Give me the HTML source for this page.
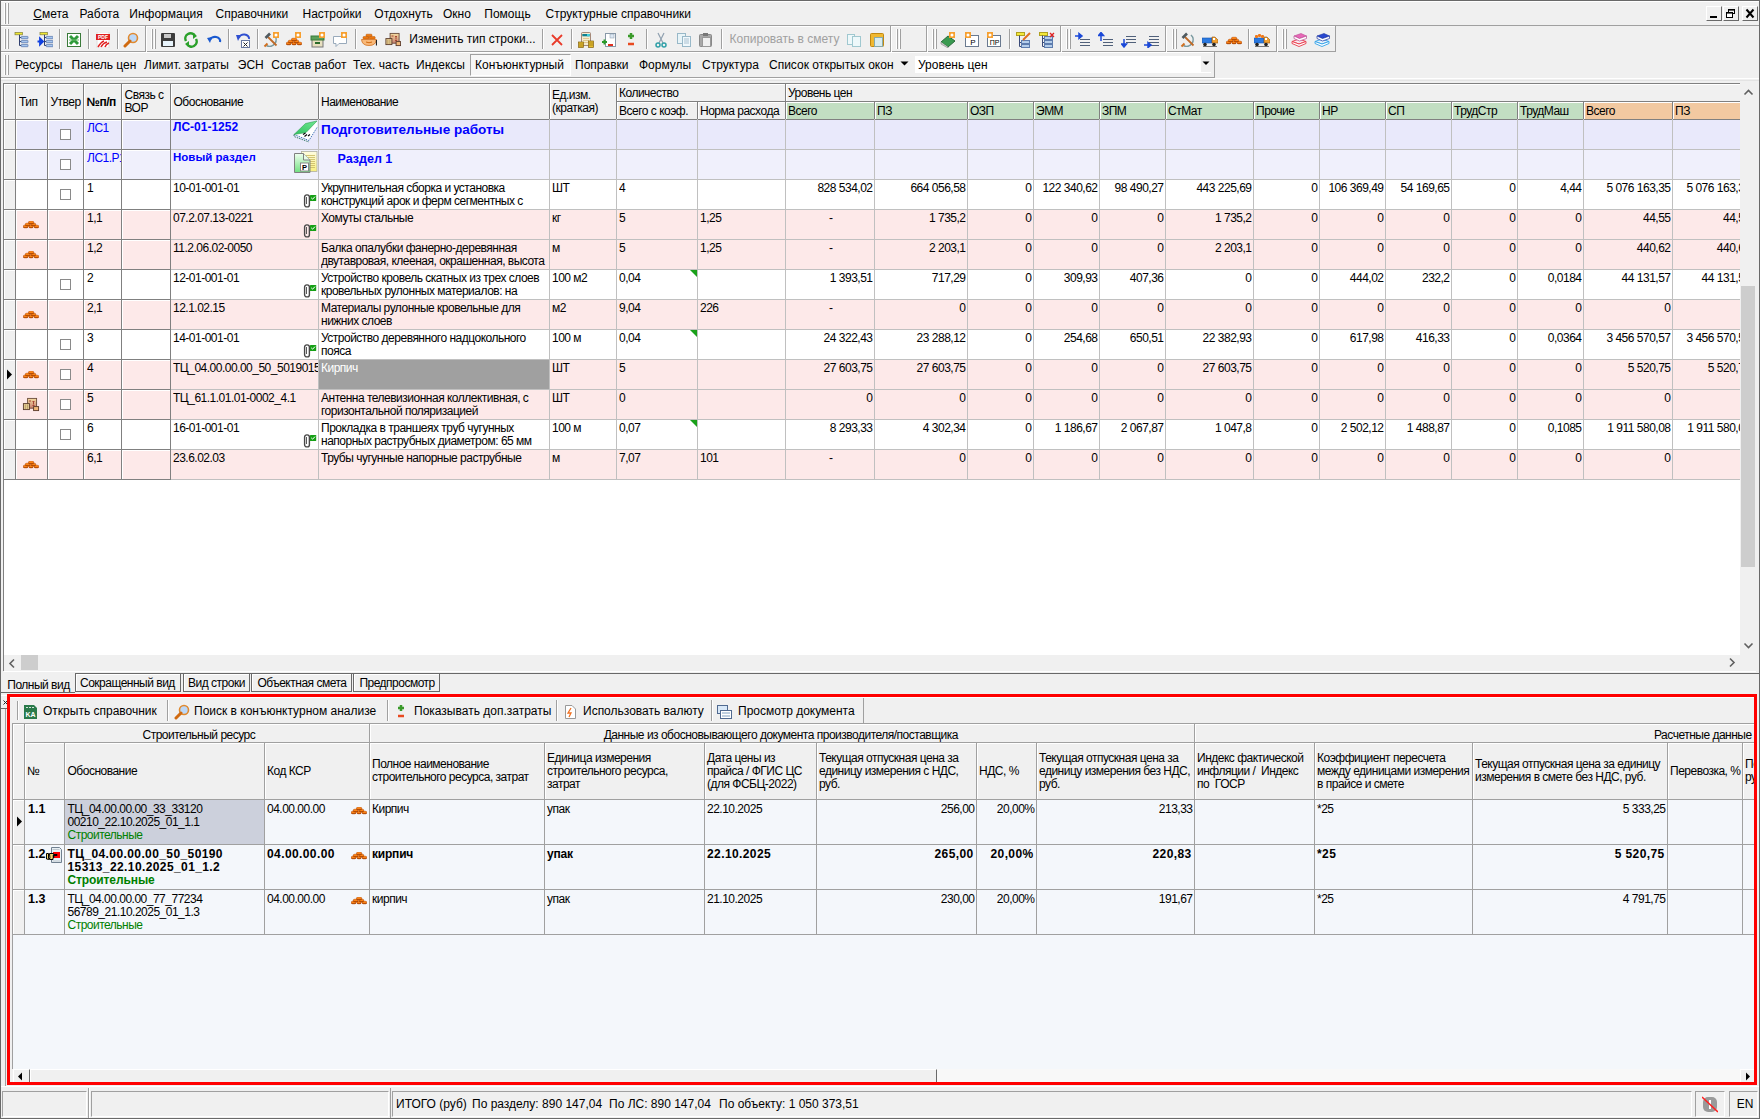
<!DOCTYPE html><html><head><meta charset="utf-8"><style>
html,body{margin:0;padding:0;}
body{width:1760px;height:1119px;position:relative;overflow:hidden;background:#f0f0f0;font-family:"Liberation Sans", sans-serif;}
div{position:absolute;box-sizing:border-box;}
</style></head><body>
<div style="left:0px;top:0px;width:1760px;height:1px;background:#696969"></div>
<div style="left:0px;top:0px;width:1px;height:1119px;background:#696969"></div>
<div style="left:1759px;top:0px;width:1px;height:1119px;background:#696969"></div>
<div style="left:0px;top:1118px;width:1760px;height:1px;background:#696969"></div>
<div style="left:1px;top:1px;width:1758px;height:1px;background:#ffffff"></div>
<div style="left:4px;top:3px;width:1px;height:21px;background:#ffffff"></div>
<div style="left:5px;top:3px;width:1px;height:21px;background:#a0a0a0"></div>
<div style="left:7px;top:3px;width:1px;height:21px;background:#ffffff"></div>
<div style="left:8px;top:3px;width:1px;height:21px;background:#a0a0a0"></div>
<div style="left:33.3px;top:6.84px;font-size:12px;line-height:14px;color:#000;white-space:nowrap;"><u>С</u>мета</div>
<div style="left:79.5px;top:6.84px;font-size:12px;line-height:14px;color:#000;white-space:nowrap;">Работа</div>
<div style="left:129.3px;top:6.84px;font-size:12px;line-height:14px;color:#000;white-space:nowrap;">Информация</div>
<div style="left:215.5px;top:6.84px;font-size:12px;line-height:14px;color:#000;white-space:nowrap;">Справочники</div>
<div style="left:302.5px;top:6.84px;font-size:12px;line-height:14px;color:#000;white-space:nowrap;">Настройки</div>
<div style="left:374.3px;top:6.84px;font-size:12px;line-height:14px;color:#000;white-space:nowrap;">Отдохнуть</div>
<div style="left:443px;top:6.84px;font-size:12px;line-height:14px;color:#000;white-space:nowrap;">Окно</div>
<div style="left:484.3px;top:6.84px;font-size:12px;line-height:14px;color:#000;white-space:nowrap;">Помощь</div>
<div style="left:545.5px;top:6.84px;font-size:12px;line-height:14px;color:#000;white-space:nowrap;">Структурные справочники</div>
<div style="left:1px;top:25px;width:1758px;height:1px;background:#a0a0a0"></div>
<div style="left:1706px;top:6px;width:16px;height:15px;background:#f0f0f0;border-top:1px solid #ffffff;border-left:1px solid #ffffff;border-right:1px solid #696969;border-bottom:1px solid #696969"></div>
<svg style="position:absolute;left:1706px;top:6px" width="16" height="15" viewBox="0 0 16 15"><rect x="4" y="10" width="7" height="2" fill="#000"/></svg>
<div style="left:1723px;top:6px;width:16px;height:15px;background:#f0f0f0;border-top:1px solid #ffffff;border-left:1px solid #ffffff;border-right:1px solid #696969;border-bottom:1px solid #696969"></div>
<svg style="position:absolute;left:1723px;top:6px" width="16" height="15" viewBox="0 0 16 15"><rect x="5.5" y="3.5" width="6" height="4" fill="none" stroke="#000"/><rect x="5" y="3" width="7" height="1.6" fill="#000"/><rect x="3.5" y="6.5" width="6" height="5" fill="#fff" stroke="#000"/><rect x="3" y="6" width="7" height="1.6" fill="#000"/></svg>
<div style="left:1742px;top:6px;width:16px;height:15px;background:#f0f0f0;border-top:1px solid #ffffff;border-left:1px solid #ffffff;border-right:1px solid #696969;border-bottom:1px solid #696969"></div>
<svg style="position:absolute;left:1742px;top:6px" width="16" height="15" viewBox="0 0 16 15"><path d="M4.5 3.5L11.5 11.5M11.5 3.5L4.5 11.5" stroke="#000" stroke-width="2"/></svg>
<div style="left:1px;top:26px;width:1334px;height:1px;background:#ffffff"></div>
<div style="left:1px;top:51px;width:1335px;height:1px;background:#a0a0a0"></div>
<div style="left:145px;top:26px;width:1px;height:26px;background:#a0a0a0"></div>
<div style="left:146px;top:26px;width:1px;height:26px;background:#ffffff"></div>
<div style="left:890px;top:26px;width:1px;height:26px;background:#a0a0a0"></div>
<div style="left:891px;top:26px;width:1px;height:26px;background:#ffffff"></div>
<div style="left:926px;top:26px;width:1px;height:26px;background:#a0a0a0"></div>
<div style="left:927px;top:26px;width:1px;height:26px;background:#ffffff"></div>
<div style="left:1060px;top:26px;width:1px;height:26px;background:#a0a0a0"></div>
<div style="left:1061px;top:26px;width:1px;height:26px;background:#ffffff"></div>
<div style="left:1165px;top:26px;width:1px;height:26px;background:#a0a0a0"></div>
<div style="left:1166px;top:26px;width:1px;height:26px;background:#ffffff"></div>
<div style="left:1276px;top:26px;width:1px;height:26px;background:#a0a0a0"></div>
<div style="left:1277px;top:26px;width:1px;height:26px;background:#ffffff"></div>
<div style="left:1335px;top:26px;width:1px;height:26px;background:#a0a0a0"></div>
<div style="left:4px;top:29px;width:1px;height:20px;background:#ffffff"></div>
<div style="left:5px;top:29px;width:1px;height:20px;background:#a0a0a0"></div>
<div style="left:7px;top:29px;width:1px;height:20px;background:#ffffff"></div>
<div style="left:8px;top:29px;width:1px;height:20px;background:#a0a0a0"></div>
<div style="left:151px;top:29px;width:1px;height:20px;background:#ffffff"></div>
<div style="left:152px;top:29px;width:1px;height:20px;background:#a0a0a0"></div>
<div style="left:154px;top:29px;width:1px;height:20px;background:#ffffff"></div>
<div style="left:155px;top:29px;width:1px;height:20px;background:#a0a0a0"></div>
<div style="left:896px;top:29px;width:1px;height:20px;background:#ffffff"></div>
<div style="left:897px;top:29px;width:1px;height:20px;background:#a0a0a0"></div>
<div style="left:899px;top:29px;width:1px;height:20px;background:#ffffff"></div>
<div style="left:900px;top:29px;width:1px;height:20px;background:#a0a0a0"></div>
<div style="left:932px;top:29px;width:1px;height:20px;background:#ffffff"></div>
<div style="left:933px;top:29px;width:1px;height:20px;background:#a0a0a0"></div>
<div style="left:935px;top:29px;width:1px;height:20px;background:#ffffff"></div>
<div style="left:936px;top:29px;width:1px;height:20px;background:#a0a0a0"></div>
<div style="left:1066px;top:29px;width:1px;height:20px;background:#ffffff"></div>
<div style="left:1067px;top:29px;width:1px;height:20px;background:#a0a0a0"></div>
<div style="left:1069px;top:29px;width:1px;height:20px;background:#ffffff"></div>
<div style="left:1070px;top:29px;width:1px;height:20px;background:#a0a0a0"></div>
<div style="left:1172px;top:29px;width:1px;height:20px;background:#ffffff"></div>
<div style="left:1173px;top:29px;width:1px;height:20px;background:#a0a0a0"></div>
<div style="left:1175px;top:29px;width:1px;height:20px;background:#ffffff"></div>
<div style="left:1176px;top:29px;width:1px;height:20px;background:#a0a0a0"></div>
<div style="left:1282px;top:29px;width:1px;height:20px;background:#ffffff"></div>
<div style="left:1283px;top:29px;width:1px;height:20px;background:#a0a0a0"></div>
<div style="left:1285px;top:29px;width:1px;height:20px;background:#ffffff"></div>
<div style="left:1286px;top:29px;width:1px;height:20px;background:#a0a0a0"></div>
<div style="left:59px;top:29px;width:1px;height:20px;background:#a0a0a0"></div>
<div style="left:60px;top:29px;width:1px;height:20px;background:#ffffff"></div>
<div style="left:88px;top:29px;width:1px;height:20px;background:#a0a0a0"></div>
<div style="left:89px;top:29px;width:1px;height:20px;background:#ffffff"></div>
<div style="left:117px;top:29px;width:1px;height:20px;background:#a0a0a0"></div>
<div style="left:118px;top:29px;width:1px;height:20px;background:#ffffff"></div>
<div style="left:228px;top:29px;width:1px;height:20px;background:#a0a0a0"></div>
<div style="left:229px;top:29px;width:1px;height:20px;background:#ffffff"></div>
<div style="left:257px;top:29px;width:1px;height:20px;background:#a0a0a0"></div>
<div style="left:258px;top:29px;width:1px;height:20px;background:#ffffff"></div>
<div style="left:355px;top:29px;width:1px;height:20px;background:#a0a0a0"></div>
<div style="left:356px;top:29px;width:1px;height:20px;background:#ffffff"></div>
<div style="left:542px;top:29px;width:1px;height:20px;background:#a0a0a0"></div>
<div style="left:543px;top:29px;width:1px;height:20px;background:#ffffff"></div>
<div style="left:571px;top:29px;width:1px;height:20px;background:#a0a0a0"></div>
<div style="left:572px;top:29px;width:1px;height:20px;background:#ffffff"></div>
<div style="left:646px;top:29px;width:1px;height:20px;background:#a0a0a0"></div>
<div style="left:647px;top:29px;width:1px;height:20px;background:#ffffff"></div>
<div style="left:721px;top:29px;width:1px;height:20px;background:#a0a0a0"></div>
<div style="left:722px;top:29px;width:1px;height:20px;background:#ffffff"></div>
<div style="left:1009px;top:29px;width:1px;height:20px;background:#a0a0a0"></div>
<div style="left:1010px;top:29px;width:1px;height:20px;background:#ffffff"></div>
<div style="left:1248px;top:29px;width:1px;height:20px;background:#a0a0a0"></div>
<div style="left:1249px;top:29px;width:1px;height:20px;background:#ffffff"></div>
<svg style="position:absolute;left:14px;top:32px" width="16" height="16" viewBox="0 0 16 16"><rect x="1" y="0.4" width="7.5" height="2.4" fill="#f0e830" stroke="#808040" stroke-width="0.7"/><path d="M5.5 2.8V13.5H7.2M5.5 5.5H7.2M5.5 9.5H7.2" stroke="#304070" stroke-width="1" fill="none"/><rect x="7.2" y="4.4" width="6.8" height="2.3" rx="0.5" fill="#a8c8f0" stroke="#5070a8" stroke-width="0.7"/><rect x="7.2" y="8.4" width="6.8" height="2.3" rx="0.5" fill="#a8c8f0" stroke="#5070a8" stroke-width="0.7"/><rect x="7.2" y="12.4" width="6.8" height="2.3" rx="0.5" fill="#a8c8f0" stroke="#5070a8" stroke-width="0.7"/></svg>
<svg style="position:absolute;left:37px;top:32px" width="16" height="16" viewBox="0 0 16 16"><rect x="3" y="0.4" width="7.5" height="2.4" fill="#f0e830" stroke="#808040" stroke-width="0.7"/><path d="M7.5 2.8V13.5H9.2M7.5 5.5H9.2M7.5 9.5H9.2" stroke="#304070" stroke-width="1" fill="none"/><rect x="9.2" y="4.4" width="6.8" height="2.3" rx="0.5" fill="#a8c8f0" stroke="#5070a8" stroke-width="0.7"/><rect x="9.2" y="8.4" width="6.8" height="2.3" rx="0.5" fill="#a8c8f0" stroke="#5070a8" stroke-width="0.7"/><rect x="9.2" y="12.4" width="6.8" height="2.3" rx="0.5" fill="#a8c8f0" stroke="#5070a8" stroke-width="0.7"/><path d="M0.5 9.5H4M3 6.5L6 9.5L3 12.5Z" stroke="#1040e0" stroke-width="1.8" fill="#1040e0"/></svg>
<svg style="position:absolute;left:66px;top:32px" width="16" height="16" viewBox="0 0 16 16"><rect x="1.5" y="1.5" width="13" height="13" fill="#fff" stroke="#3a7a3a"/><path d="M4 4L12 12M12 4L4 12" stroke="#2e9a3a" stroke-width="3"/><path d="M3 8H13" stroke="#6cbf6c" stroke-width="1"/></svg>
<svg style="position:absolute;left:95px;top:32px" width="16" height="16" viewBox="0 0 16 16"><rect x="2" y="0" width="12" height="16" fill="#fff" stroke="#ddd"/><rect x="1" y="2" width="14" height="6" fill="#e02020"/><text x="8" y="7" font-size="5" font-weight="bold" fill="#fff" text-anchor="middle" font-family="Liberation Sans">PDF</text><path d="M3 15Q6 10 9 9M6 15Q8 11 12 10M10 15Q11 12 14 11" stroke="#e02020" stroke-width="1.5" fill="none"/></svg>
<svg style="position:absolute;left:123px;top:32px" width="16" height="16" viewBox="0 0 16 16"><circle cx="10" cy="6" r="4.5" fill="#bcd8f8" stroke="#e08a30" stroke-width="1.6"/><path d="M7 9L2 14" stroke="#d06a10" stroke-width="3" stroke-linecap="round"/></svg>
<svg style="position:absolute;left:160px;top:32px" width="16" height="16" viewBox="0 0 16 16"><rect x="1" y="1" width="14" height="14" rx="1" fill="#3c3c3c"/><rect x="4" y="2" width="7" height="4" fill="#c8c8c8"/><rect x="3" y="9" width="10" height="5" fill="#e8f4fc"/></svg>
<svg style="position:absolute;left:183px;top:32px" width="16" height="16" viewBox="0 0 16 16"><path d="M3 9A5 5 0 0 1 12 4" stroke="#2aa02a" stroke-width="2.5" fill="none"/><path d="M13 7A5 5 0 0 1 4 12" stroke="#2aa02a" stroke-width="2.5" fill="none"/><path d="M10 1L14 4L10 7Z" fill="#2aa02a"/><path d="M6 9L2 12L6 15Z" fill="#2aa02a"/></svg>
<svg style="position:absolute;left:206px;top:32px" width="16" height="16" viewBox="0 0 16 16"><path d="M4 8A5 4 0 0 1 14 10" stroke="#1a5ad0" stroke-width="2.2" fill="none"/><path d="M1 6L6 5L4 11Z" fill="#1a5ad0"/></svg>
<svg style="position:absolute;left:235px;top:32px" width="16" height="16" viewBox="0 0 16 16"><rect x="6.5" y="8.5" width="8" height="7" fill="#fff" stroke="#6a7aa0"/><path d="M8.5 10.5L12.5 14.5M12.5 10.5L8.5 14.5" stroke="#222"/><path d="M4 6A5 4 0 0 1 14 7" stroke="#3050d0" stroke-width="2" fill="none"/><path d="M1 3L6 3L3 9Z" fill="#3050d0"/></svg>
<svg style="position:absolute;left:263px;top:32px" width="16" height="16" viewBox="0 0 16 16"><path d="M3.5 13.5A6.5 6.5 0 0 0 11 3" stroke="#7a9aa0" stroke-width="1.6" fill="none"/><path d="M1.5 14.5L4.5 11.5" stroke="#d07020" stroke-width="2"/><path d="M5 5L13.5 13.5" stroke="#c06a28" stroke-width="1.8"/><path d="M2.5 6L7 1.5" stroke="#505a60" stroke-width="2.6"/><rect x="10" y="0" width="6" height="6" fill="#f7a030"/><circle cx="13" cy="3" r="1.5" fill="#fff"/></svg>
<svg style="position:absolute;left:286px;top:32px" width="16" height="16" viewBox="0 0 16 16"><rect x="0.25" y="10.25" width="4.8" height="2.6" rx="1.3" fill="#e86a08" stroke="#a84000" stroke-width="0.5"/><rect x="0.8" y="10.5" width="3.6999999999999997" height="1.2" rx="0.6" fill="#ff8c1a"/><rect x="0.5" y="12.2" width="4.3" height="0.8" fill="#b04800"/><rect x="5.85" y="10.25" width="4.4" height="2.6" rx="1.3" fill="#e86a08" stroke="#a84000" stroke-width="0.5"/><rect x="6.3999999999999995" y="10.5" width="3.3000000000000003" height="1.2" rx="0.6" fill="#ff8c1a"/><rect x="6.1" y="12.2" width="3.9000000000000004" height="0.8" fill="#b04800"/><rect x="11.05" y="10.25" width="4.7" height="2.6" rx="1.3" fill="#e86a08" stroke="#a84000" stroke-width="0.5"/><rect x="11.600000000000001" y="10.5" width="3.6" height="1.2" rx="0.6" fill="#ff8c1a"/><rect x="11.3" y="12.2" width="4.2" height="0.8" fill="#b04800"/><rect x="2.25" y="8.25" width="5.0" height="2.6" rx="1.3" fill="#e86a08" stroke="#a84000" stroke-width="0.5"/><rect x="2.8" y="8.5" width="3.9" height="1.2" rx="0.6" fill="#ff8c1a"/><rect x="2.5" y="10.2" width="4.5" height="0.8" fill="#b04800"/><rect x="8.05" y="8.25" width="4.7" height="2.6" rx="1.3" fill="#e86a08" stroke="#a84000" stroke-width="0.5"/><rect x="8.6" y="8.5" width="3.6" height="1.2" rx="0.6" fill="#ff8c1a"/><rect x="8.3" y="10.2" width="4.2" height="0.8" fill="#b04800"/><rect x="5.45" y="6.25" width="5.3" height="2.6" rx="1.3" fill="#e86a08" stroke="#a84000" stroke-width="0.5"/><rect x="6.0" y="6.5" width="4.199999999999999" height="1.2" rx="0.6" fill="#ff8c1a"/><rect x="5.7" y="8.2" width="4.8" height="0.8" fill="#b04800"/><rect x="9" y="0" width="6" height="6" fill="#f7a030"/><circle cx="12" cy="3" r="1.5" fill="#fff"/></svg>
<svg style="position:absolute;left:310px;top:32px" width="16" height="16" viewBox="0 0 16 16"><rect x="2" y="5" width="11" height="10" fill="#e8e0c0" stroke="#777"/><rect x="1" y="4" width="13" height="4" fill="#5aa05a" stroke="#3a7a3a"/><rect x="5" y="10" width="5" height="2" fill="#2a6a2a"/><rect x="9" y="0" width="6" height="6" fill="#f7a030"/><circle cx="12" cy="3" r="1.5" fill="#fff"/></svg>
<svg style="position:absolute;left:332px;top:32px" width="16" height="16" viewBox="0 0 16 16"><path d="M1.5 4.5H14.5V11.5H7L4 14.5V11.5H1.5Z" fill="#fff" stroke="#9ab"/><rect x="9" y="0" width="6" height="6" fill="#f7a030"/><circle cx="12" cy="3" r="1.5" fill="#fff"/></svg>
<svg style="position:absolute;left:361px;top:32px" width="16" height="16" viewBox="0 0 16 16"><rect x="5" y="2.2" width="6" height="2.4" rx="0.8" fill="#f07a10" stroke="#b05000" stroke-width="0.5"/><rect x="2" y="4.6" width="6" height="2.4" rx="0.8" fill="#f07a10" stroke="#b05000" stroke-width="0.5"/><rect x="8.2" y="4.6" width="6" height="2.4" rx="0.8" fill="#f07a10" stroke="#b05000" stroke-width="0.5"/><path d="M0.5 7.5H15.5Q15 13.5 8 13.5Q1 13.5 0.5 7.5Z" fill="#f8b878" stroke="#d07020" stroke-width="0.8"/><path d="M5 10Q8 11.5 11 10" stroke="#d06a10" stroke-width="1" fill="none"/><path d="M15.5 8V13.5" stroke="#222" stroke-width="1.2"/></svg>
<svg style="position:absolute;left:385px;top:32px" width="16" height="16" viewBox="0 0 16 16"><defs><linearGradient id="bx0" x1="0" y1="0" x2="0" y2="1"><stop offset="0" stop-color="#f4dca0"/><stop offset="1" stop-color="#c88070"/></linearGradient></defs><rect x="5.1" y="1.4" width="9" height="9.8" fill="url(#bx0)" stroke="#6a4a3a" stroke-width="0.9"/><path d="M6.5 4H8.5M10 4.5H12M11 5V7.5M10 8.5H12" stroke="#a03a2a" stroke-width="0.9"/><rect x="0.9" y="6.6" width="6" height="6" fill="#e8d098" stroke="#5a3a2a" stroke-width="0.9"/><path d="M2.8 7.5V12M4.9 7.5V12" stroke="#a88850" stroke-width="0.7"/><rect x="11.1" y="9.6" width="4.5" height="4" fill="#f0b878" stroke="#5a3a2a" stroke-width="0.9"/></svg>
<svg style="position:absolute;left:549px;top:32px" width="16" height="16" viewBox="0 0 16 16"><path d="M3 3L13 13M13 3L3 13" stroke="#e83a2a" stroke-width="1.8"/></svg>
<svg style="position:absolute;left:578px;top:32px" width="16" height="16" viewBox="0 0 16 16"><rect x="3.5" y="0.5" width="9" height="13" rx="1" fill="#f4ecd0" stroke="#907060" stroke-width="0.8"/><rect x="4.3" y="2" width="7.4" height="2.3" fill="#108090"/><rect x="9" y="2" width="2.7" height="2.3" fill="#40d0e0"/><path d="M5 6.5H11M5 8.5H11M5 10.5H11" stroke="#e0c890" stroke-width="1"/><rect x="0.5" y="10" width="5" height="5.5" fill="#e8c030" stroke="#806010" stroke-width="0.7"/><path d="M1 12H5M1 14H5" stroke="#806010" stroke-width="0.6"/><rect x="10.5" y="9" width="5" height="6.5" fill="#e8c030" stroke="#806010" stroke-width="0.7"/><path d="M11 11H15M11 13H15" stroke="#806010" stroke-width="0.6"/></svg>
<svg style="position:absolute;left:601px;top:32px" width="16" height="16" viewBox="0 0 16 16"><rect x="4.5" y="1.5" width="10" height="13" fill="#fff" stroke="#8898a8"/><rect x="9" y="2" width="4" height="4" fill="#dde8f4" stroke="#8898a8" stroke-width="0.5"/><path d="M1 10H6M3.5 7.5V12.5" stroke="#2a9a2a" stroke-width="2"/><path d="M7 13H12" stroke="#e03020" stroke-width="2"/></svg>
<svg style="position:absolute;left:623px;top:32px" width="16" height="16" viewBox="0 0 16 16"><path d="M5 4H11M8 1V7" stroke="#3a9a2a" stroke-width="2.5"/><path d="M5 12H11" stroke="#e84a20" stroke-width="2.5"/></svg>
<svg style="position:absolute;left:653px;top:32px" width="16" height="16" viewBox="0 0 16 16"><path d="M5 1L10 11M11 1L6 11" stroke="#90a0b0" stroke-width="1.2"/><circle cx="5" cy="13" r="2" fill="none" stroke="#30a0a8" stroke-width="1.5"/><circle cx="11" cy="13" r="2" fill="none" stroke="#30a0a8" stroke-width="1.5"/></svg>
<svg style="position:absolute;left:676px;top:32px" width="16" height="16" viewBox="0 0 16 16"><rect x="1.5" y="1.5" width="8" height="10" fill="#e8f4f8" stroke="#98b8c8"/><rect x="6.5" y="4.5" width="8" height="10" fill="#f0f8fc" stroke="#98b8c8"/><path d="M8 7H13M8 9H13M8 11H13" stroke="#a8c0d0"/></svg>
<svg style="position:absolute;left:698px;top:32px" width="16" height="16" viewBox="0 0 16 16"><rect x="1.5" y="2.5" width="12" height="12" rx="1" fill="#a8a8a8" stroke="#888"/><rect x="4.5" y="5.5" width="8" height="9" fill="#f0f0f0" stroke="#999"/><rect x="5" y="1" width="5" height="3" fill="#777"/></svg>
<svg style="position:absolute;left:846px;top:32px" width="16" height="16" viewBox="0 0 16 16"><rect x="1.5" y="2.5" width="7" height="10" fill="#eef8fa" stroke="#a0c8d0"/><rect x="6.5" y="4.5" width="8" height="10" fill="#eef8fa" stroke="#a0c8d0"/></svg>
<svg style="position:absolute;left:869px;top:32px" width="16" height="16" viewBox="0 0 16 16"><rect x="1.5" y="1.5" width="13" height="13" rx="1" fill="#f0b830" stroke="#c08810"/><rect x="5.5" y="5.5" width="8" height="9" fill="#d8ecf0" stroke="#8aa"/></svg>
<svg style="position:absolute;left:940px;top:32px" width="16" height="16" viewBox="0 0 16 16"><path d="M1 10L8 4L15 9L8 15Z" fill="#3a9a50" stroke="#2a6a3a"/><path d="M1 10L1 12L8 16L8 15" fill="#ccc" stroke="#888" stroke-width="0.6"/><rect x="9" y="0" width="6" height="6" fill="#f7a030"/><circle cx="12" cy="3" r="1.5" fill="#fff"/></svg>
<svg style="position:absolute;left:964px;top:32px" width="16" height="16" viewBox="0 0 16 16"><rect x="1.5" y="3.5" width="13" height="11" fill="#fff" stroke="#6a7a90"/><text x="9" y="13" font-size="8" fill="#000" text-anchor="middle" font-family="Liberation Sans">P</text><rect x="1" y="0" width="6" height="6" fill="#f7a030"/><circle cx="4" cy="3" r="1.5" fill="#fff"/></svg>
<svg style="position:absolute;left:986px;top:32px" width="16" height="16" viewBox="0 0 16 16"><rect x="1.5" y="3.5" width="13" height="11" fill="#fff" stroke="#6a7a90"/><text x="8.5" y="13" font-size="7" fill="#000" text-anchor="middle" font-family="Liberation Sans">ПР</text><rect x="1" y="0" width="6" height="6" fill="#f7a030"/><circle cx="4" cy="3" r="1.5" fill="#fff"/></svg>
<svg style="position:absolute;left:1016px;top:32px" width="16" height="16" viewBox="0 0 16 16"><rect x="0.5" y="0.5" width="8" height="3" fill="#f2e83a" stroke="#b0a020"/><path d="M3.5 3.5V14.5H6M3.5 10.5H6" stroke="#3a4a78" fill="none"/><rect x="5.5" y="8.5" width="8" height="3" fill="#b4cdea" stroke="#5d7cae"/><rect x="5.5" y="12.5" width="8" height="3" fill="#b4cdea" stroke="#5d7cae"/><path d="M7 8L14 1" stroke="#e07020" stroke-width="2"/></svg>
<svg style="position:absolute;left:1039px;top:32px" width="16" height="16" viewBox="0 0 16 16"><rect x="0.5" y="0.5" width="8" height="3" fill="#f2e83a" stroke="#b0a020"/><path d="M3.5 3.5V14.5H6M3.5 6.5H6M3.5 10.5H6" stroke="#3a4a78" fill="none"/><rect x="5.5" y="4.5" width="8" height="3" fill="#b4cdea" stroke="#5d7cae"/><rect x="5.5" y="8.5" width="8" height="3" fill="#b4cdea" stroke="#5d7cae"/><rect x="5.5" y="12.5" width="8" height="3" fill="#b4cdea" stroke="#5d7cae"/><path d="M11 1L15 5M15 1L11 5" stroke="#e02020" stroke-width="1.3"/></svg>
<svg style="position:absolute;left:1075px;top:32px" width="16" height="16" viewBox="0 0 16 16"><path d="M5 7.5H15M5 10.5H15M5 13.5H15" stroke="#50607a"/><path d="M0 4H5M4 1.5L7 4L4 6.5Z" stroke="#1a48d8" stroke-width="1.5" fill="#1a48d8"/></svg>
<svg style="position:absolute;left:1098px;top:32px" width="16" height="16" viewBox="0 0 16 16"><path d="M5 7.5H15M5 10.5H15M5 13.5H15" stroke="#50607a"/><path d="M3 9V2M0.5 3.5L3 0.5L5.5 3.5Z" stroke="#1a48d8" stroke-width="1.5" fill="#1a48d8"/></svg>
<svg style="position:absolute;left:1121px;top:32px" width="16" height="16" viewBox="0 0 16 16"><path d="M5 4.5H15M5 7.5H15M5 10.5H15" stroke="#50607a"/><path d="M3 7V14M0.5 12L3 15L5.5 12Z" stroke="#1a48d8" stroke-width="1.5" fill="#1a48d8"/></svg>
<svg style="position:absolute;left:1144px;top:32px" width="16" height="16" viewBox="0 0 16 16"><path d="M5 4.5H15M5 7.5H15M5 10.5H15" stroke="#50607a"/><path d="M5 13.5H15" stroke="#50607a"/><path d="M0 13H5M4 10.5L7 13L4 15.5Z" stroke="#1a48d8" stroke-width="1.5" fill="#1a48d8"/></svg>
<svg style="position:absolute;left:1180px;top:32px" width="16" height="16" viewBox="0 0 16 16"><path d="M3.5 13.5A6.5 6.5 0 0 0 11 3" stroke="#7a9aa0" stroke-width="1.6" fill="none"/><path d="M1.5 14.5L4.5 11.5" stroke="#d07020" stroke-width="2"/><path d="M5 5L13.5 13.5" stroke="#c06a28" stroke-width="1.8"/><path d="M2.5 6L7 1.5" stroke="#505a60" stroke-width="2.6"/></svg>
<svg style="position:absolute;left:1202px;top:32px" width="16" height="16" viewBox="0 0 16 16"><rect x="0" y="6" width="10" height="5" fill="#2a78e0" stroke="#1a58b0" stroke-width="0.6"/><path d="M10 5H13L16 8V11H10Z" fill="#f0a030" stroke="#905010" stroke-width="0.6"/><rect x="11" y="6" width="2" height="2" fill="#fff"/><circle cx="3" cy="12.5" r="1.8" fill="#222"/><circle cx="12" cy="12.5" r="1.8" fill="#222"/><path d="M1 14.5H15" stroke="#555" stroke-width="0.8"/></svg>
<svg style="position:absolute;left:1226px;top:32px" width="16" height="16" viewBox="0 0 16 16"><rect x="0.25" y="9.25" width="4.8" height="2.6" rx="1.3" fill="#e86a08" stroke="#a84000" stroke-width="0.5"/><rect x="0.8" y="9.5" width="3.6999999999999997" height="1.2" rx="0.6" fill="#ff8c1a"/><rect x="0.5" y="11.2" width="4.3" height="0.8" fill="#b04800"/><rect x="5.85" y="9.25" width="4.4" height="2.6" rx="1.3" fill="#e86a08" stroke="#a84000" stroke-width="0.5"/><rect x="6.3999999999999995" y="9.5" width="3.3000000000000003" height="1.2" rx="0.6" fill="#ff8c1a"/><rect x="6.1" y="11.2" width="3.9000000000000004" height="0.8" fill="#b04800"/><rect x="11.05" y="9.25" width="4.7" height="2.6" rx="1.3" fill="#e86a08" stroke="#a84000" stroke-width="0.5"/><rect x="11.600000000000001" y="9.5" width="3.6" height="1.2" rx="0.6" fill="#ff8c1a"/><rect x="11.3" y="11.2" width="4.2" height="0.8" fill="#b04800"/><rect x="2.25" y="7.25" width="5.0" height="2.6" rx="1.3" fill="#e86a08" stroke="#a84000" stroke-width="0.5"/><rect x="2.8" y="7.5" width="3.9" height="1.2" rx="0.6" fill="#ff8c1a"/><rect x="2.5" y="9.2" width="4.5" height="0.8" fill="#b04800"/><rect x="8.05" y="7.25" width="4.7" height="2.6" rx="1.3" fill="#e86a08" stroke="#a84000" stroke-width="0.5"/><rect x="8.6" y="7.5" width="3.6" height="1.2" rx="0.6" fill="#ff8c1a"/><rect x="8.3" y="9.2" width="4.2" height="0.8" fill="#b04800"/><rect x="5.45" y="5.25" width="5.3" height="2.6" rx="1.3" fill="#e86a08" stroke="#a84000" stroke-width="0.5"/><rect x="6.0" y="5.5" width="4.199999999999999" height="1.2" rx="0.6" fill="#ff8c1a"/><rect x="5.7" y="7.2" width="4.8" height="0.8" fill="#b04800"/></svg>
<svg style="position:absolute;left:1254px;top:32px" width="16" height="16" viewBox="0 0 16 16"><rect x="0" y="6" width="10" height="5" fill="#2a78e0" stroke="#1a58b0" stroke-width="0.6"/><path d="M10 5H13L16 8V11H10Z" fill="#f0a030" stroke="#905010" stroke-width="0.6"/><rect x="11" y="6" width="2" height="2" fill="#fff"/><circle cx="3" cy="12.5" r="1.8" fill="#222"/><circle cx="12" cy="12.5" r="1.8" fill="#222"/><path d="M1 14.5H15" stroke="#555" stroke-width="0.8"/><rect x="1" y="3" width="3" height="3" rx="1" fill="#f07818"/><rect x="4" y="2" width="3" height="3" rx="1" fill="#f07818"/><rect x="7" y="3" width="3" height="3" rx="1" fill="#f07818"/></svg>
<svg style="position:absolute;left:1291px;top:32px" width="16" height="16" viewBox="0 0 16 16"><path d="M1 9.5L8 7L15 9.5L8 12Z" fill="#fbe8ec" stroke="#e83848" stroke-width="0.9"/><path d="M1 9.5V11.5L8 14.5L15 11.5V9.5L8 12Z" fill="#fff" stroke="#e83848" stroke-width="0.9"/><path d="M3 4L10 1.5L15.5 4L8.5 6.5Z" fill="#e868b8" stroke="#b84890" stroke-width="0.6"/><path d="M3 4V6.5L8.5 9L15.5 6.5V4L8.5 6.5Z" fill="#fff" stroke="#b84890" stroke-width="0.7"/></svg>
<svg style="position:absolute;left:1314px;top:32px" width="16" height="16" viewBox="0 0 16 16"><path d="M1 9.5L8 7L15 9.5L8 12Z" fill="#e4f2fc" stroke="#30a0e8" stroke-width="0.9"/><path d="M1 9.5V11.5L8 14.5L15 11.5V9.5L8 12Z" fill="#fff" stroke="#30a0e8" stroke-width="0.9"/><path d="M3 4L10 1.5L15.5 4L8.5 6.5Z" fill="#2848d0" stroke="#1830a0" stroke-width="0.6"/><path d="M3 4V6.5L8.5 9L15.5 6.5V4L8.5 6.5Z" fill="#fff" stroke="#1830a0" stroke-width="0.7"/></svg>
<div style="left:409.3px;top:31.84px;font-size:12px;line-height:14px;color:#000;white-space:nowrap;">Изменить тип строки...</div>
<div style="left:729.6px;top:31.84px;font-size:12px;line-height:14px;color:#a0a0a0;white-space:nowrap;">Копировать в смету</div>
<div style="left:1px;top:52px;width:1213px;height:1px;background:#ffffff"></div>
<div style="left:1px;top:77px;width:1214px;height:1px;background:#a0a0a0"></div>
<div style="left:1214px;top:52px;width:1px;height:26px;background:#a0a0a0"></div>
<div style="left:4px;top:55px;width:1px;height:20px;background:#ffffff"></div>
<div style="left:5px;top:55px;width:1px;height:20px;background:#a0a0a0"></div>
<div style="left:7px;top:55px;width:1px;height:20px;background:#ffffff"></div>
<div style="left:8px;top:55px;width:1px;height:20px;background:#a0a0a0"></div>
<div style="left:15px;top:57.84px;font-size:12px;line-height:14px;color:#000;white-space:nowrap;">Ресурсы</div>
<div style="left:71.5px;top:57.84px;font-size:12px;line-height:14px;color:#000;white-space:nowrap;">Панель цен</div>
<div style="left:144px;top:57.84px;font-size:12px;line-height:14px;color:#000;white-space:nowrap;">Лимит. затраты</div>
<div style="left:237.8px;top:57.84px;font-size:12px;line-height:14px;color:#000;white-space:nowrap;">ЭСН</div>
<div style="left:271.3px;top:57.84px;font-size:12px;line-height:14px;color:#000;white-space:nowrap;">Состав работ</div>
<div style="left:353px;top:57.84px;font-size:12px;line-height:14px;color:#000;white-space:nowrap;">Тех. часть</div>
<div style="left:416px;top:57.84px;font-size:12px;line-height:14px;color:#000;white-space:nowrap;">Индексы</div>
<div style="left:470px;top:54px;width:101px;height:22px;background:#f7f7f7;border-top:1px solid #a0a0a0;border-left:1px solid #a0a0a0;border-right:1px solid #ffffff;border-bottom:1px solid #ffffff"></div>
<div style="left:475px;top:57.84px;font-size:12px;line-height:14px;color:#000;white-space:nowrap;">Конъюнктурный</div>
<div style="left:575px;top:57.84px;font-size:12px;line-height:14px;color:#000;white-space:nowrap;">Поправки</div>
<div style="left:639px;top:57.84px;font-size:12px;line-height:14px;color:#000;white-space:nowrap;">Формулы</div>
<div style="left:702px;top:57.84px;font-size:12px;line-height:14px;color:#000;white-space:nowrap;">Структура</div>
<div style="left:769px;top:57.84px;font-size:12px;line-height:14px;color:#000;white-space:nowrap;">Список открытых окон</div>
<svg style="position:absolute;left:900px;top:61px" width="9" height="5" viewBox="0 0 9 5"><path d="M0.5 0.5H8.5L4.5 4.5Z" fill="#000"/></svg>
<div style="left:915px;top:56px;width:296px;height:17px;background:#fff"></div>
<div style="left:1201px;top:56px;width:10px;height:16px;background:#f0f0f0"></div>
<svg style="position:absolute;left:1202px;top:61px" width="8" height="5" viewBox="0 0 8 5"><path d="M0.5 0.5H7.5L4 4Z" fill="#000"/></svg>
<div style="left:918px;top:57.84px;font-size:12px;line-height:14px;color:#000;white-space:nowrap;">Уровень цен</div>
<div style="left:1px;top:78px;width:1758px;height:1px;background:#ffffff"></div>
<div style="left:1px;top:80px;width:1758px;height:1px;background:#e3e3e3"></div>
<div style="left:0;top:0;width:1740px;height:655px;overflow:hidden">
<div style="left:4px;top:84px;width:1736px;height:571px;background:#fff"></div>
<div style="left:3px;top:83px;width:1737px;height:1px;background:#808080"></div>
<div style="left:3px;top:83px;width:1px;height:588px;background:#808080"></div>
<div style="left:4px;top:84px;width:11px;height:35px;background:#f0f0f0"></div>
<div style="left:4px;top:84px;width:11px;height:1px;background:#ffffff"></div>
<div style="left:4px;top:84px;width:1px;height:35px;background:#ffffff"></div>
<div style="left:16px;top:84px;width:31px;height:35px;background:#f0f0f0"></div>
<div style="left:16px;top:84px;width:31px;height:1px;background:#ffffff"></div>
<div style="left:16px;top:84px;width:1px;height:35px;background:#ffffff"></div>
<div style="left:48px;top:84px;width:35px;height:35px;background:#f0f0f0"></div>
<div style="left:48px;top:84px;width:35px;height:1px;background:#ffffff"></div>
<div style="left:48px;top:84px;width:1px;height:35px;background:#ffffff"></div>
<div style="left:84px;top:84px;width:37px;height:35px;background:#f0f0f0"></div>
<div style="left:84px;top:84px;width:37px;height:1px;background:#ffffff"></div>
<div style="left:84px;top:84px;width:1px;height:35px;background:#ffffff"></div>
<div style="left:122px;top:84px;width:48px;height:35px;background:#f0f0f0"></div>
<div style="left:122px;top:84px;width:48px;height:1px;background:#ffffff"></div>
<div style="left:122px;top:84px;width:1px;height:35px;background:#ffffff"></div>
<div style="left:171px;top:84px;width:147px;height:35px;background:#f0f0f0"></div>
<div style="left:171px;top:84px;width:147px;height:1px;background:#ffffff"></div>
<div style="left:171px;top:84px;width:1px;height:35px;background:#ffffff"></div>
<div style="left:319px;top:84px;width:230px;height:35px;background:#f0f0f0"></div>
<div style="left:319px;top:84px;width:230px;height:1px;background:#ffffff"></div>
<div style="left:319px;top:84px;width:1px;height:35px;background:#ffffff"></div>
<div style="left:550px;top:84px;width:66px;height:35px;background:#f0f0f0"></div>
<div style="left:550px;top:84px;width:66px;height:1px;background:#ffffff"></div>
<div style="left:550px;top:84px;width:1px;height:35px;background:#ffffff"></div>
<div style="left:617px;top:84px;width:168px;height:17px;background:#f0f0f0"></div>
<div style="left:617px;top:84px;width:168px;height:1px;background:#ffffff"></div>
<div style="left:617px;top:84px;width:1px;height:17px;background:#ffffff"></div>
<div style="left:786px;top:84px;width:975px;height:17px;background:#f0f0f0"></div>
<div style="left:786px;top:84px;width:975px;height:1px;background:#ffffff"></div>
<div style="left:786px;top:84px;width:1px;height:17px;background:#ffffff"></div>
<div style="left:617px;top:102px;width:80px;height:17px;background:#f0f0f0"></div>
<div style="left:617px;top:102px;width:80px;height:1px;background:#ffffff"></div>
<div style="left:617px;top:102px;width:1px;height:17px;background:#ffffff"></div>
<div style="left:619px;top:103.84px;font-size:12px;line-height:14px;color:#000;white-space:nowrap;letter-spacing:-0.5px;">Всего с коэф.</div>
<div style="left:698px;top:102px;width:87px;height:17px;background:#f0f0f0"></div>
<div style="left:698px;top:102px;width:87px;height:1px;background:#ffffff"></div>
<div style="left:698px;top:102px;width:1px;height:17px;background:#ffffff"></div>
<div style="left:700px;top:103.84px;font-size:12px;line-height:14px;color:#000;white-space:nowrap;letter-spacing:-0.5px;">Норма расхода</div>
<div style="left:786px;top:102px;width:88px;height:17px;background:#c2dec2"></div>
<div style="left:786px;top:102px;width:88px;height:1px;background:#ffffff"></div>
<div style="left:786px;top:102px;width:1px;height:17px;background:#ffffff"></div>
<div style="left:788px;top:103.84px;font-size:12px;line-height:14px;color:#000;white-space:nowrap;letter-spacing:-0.5px;">Всего</div>
<div style="left:875px;top:102px;width:92px;height:17px;background:#c2dec2"></div>
<div style="left:875px;top:102px;width:92px;height:1px;background:#ffffff"></div>
<div style="left:875px;top:102px;width:1px;height:17px;background:#ffffff"></div>
<div style="left:877px;top:103.84px;font-size:12px;line-height:14px;color:#000;white-space:nowrap;letter-spacing:-0.5px;">ПЗ</div>
<div style="left:968px;top:102px;width:65px;height:17px;background:#c2dec2"></div>
<div style="left:968px;top:102px;width:65px;height:1px;background:#ffffff"></div>
<div style="left:968px;top:102px;width:1px;height:17px;background:#ffffff"></div>
<div style="left:970px;top:103.84px;font-size:12px;line-height:14px;color:#000;white-space:nowrap;letter-spacing:-0.5px;">ОЗП</div>
<div style="left:1034px;top:102px;width:65px;height:17px;background:#c2dec2"></div>
<div style="left:1034px;top:102px;width:65px;height:1px;background:#ffffff"></div>
<div style="left:1034px;top:102px;width:1px;height:17px;background:#ffffff"></div>
<div style="left:1036px;top:103.84px;font-size:12px;line-height:14px;color:#000;white-space:nowrap;letter-spacing:-0.5px;">ЭММ</div>
<div style="left:1100px;top:102px;width:65px;height:17px;background:#c2dec2"></div>
<div style="left:1100px;top:102px;width:65px;height:1px;background:#ffffff"></div>
<div style="left:1100px;top:102px;width:1px;height:17px;background:#ffffff"></div>
<div style="left:1102px;top:103.84px;font-size:12px;line-height:14px;color:#000;white-space:nowrap;letter-spacing:-0.5px;">ЗПМ</div>
<div style="left:1166px;top:102px;width:87px;height:17px;background:#c2dec2"></div>
<div style="left:1166px;top:102px;width:87px;height:1px;background:#ffffff"></div>
<div style="left:1166px;top:102px;width:1px;height:17px;background:#ffffff"></div>
<div style="left:1168px;top:103.84px;font-size:12px;line-height:14px;color:#000;white-space:nowrap;letter-spacing:-0.5px;">СтМат</div>
<div style="left:1254px;top:102px;width:65px;height:17px;background:#c2dec2"></div>
<div style="left:1254px;top:102px;width:65px;height:1px;background:#ffffff"></div>
<div style="left:1254px;top:102px;width:1px;height:17px;background:#ffffff"></div>
<div style="left:1256px;top:103.84px;font-size:12px;line-height:14px;color:#000;white-space:nowrap;letter-spacing:-0.5px;">Прочие</div>
<div style="left:1320px;top:102px;width:65px;height:17px;background:#c2dec2"></div>
<div style="left:1320px;top:102px;width:65px;height:1px;background:#ffffff"></div>
<div style="left:1320px;top:102px;width:1px;height:17px;background:#ffffff"></div>
<div style="left:1322px;top:103.84px;font-size:12px;line-height:14px;color:#000;white-space:nowrap;letter-spacing:-0.5px;">НР</div>
<div style="left:1386px;top:102px;width:65px;height:17px;background:#c2dec2"></div>
<div style="left:1386px;top:102px;width:65px;height:1px;background:#ffffff"></div>
<div style="left:1386px;top:102px;width:1px;height:17px;background:#ffffff"></div>
<div style="left:1388px;top:103.84px;font-size:12px;line-height:14px;color:#000;white-space:nowrap;letter-spacing:-0.5px;">СП</div>
<div style="left:1452px;top:102px;width:65px;height:17px;background:#c2dec2"></div>
<div style="left:1452px;top:102px;width:65px;height:1px;background:#ffffff"></div>
<div style="left:1452px;top:102px;width:1px;height:17px;background:#ffffff"></div>
<div style="left:1454px;top:103.84px;font-size:12px;line-height:14px;color:#000;white-space:nowrap;letter-spacing:-0.5px;">ТрудСтр</div>
<div style="left:1518px;top:102px;width:65px;height:17px;background:#c2dec2"></div>
<div style="left:1518px;top:102px;width:65px;height:1px;background:#ffffff"></div>
<div style="left:1518px;top:102px;width:1px;height:17px;background:#ffffff"></div>
<div style="left:1520px;top:103.84px;font-size:12px;line-height:14px;color:#000;white-space:nowrap;letter-spacing:-0.5px;">ТрудМаш</div>
<div style="left:1584px;top:102px;width:88px;height:17px;background:#f2c9a1"></div>
<div style="left:1584px;top:102px;width:88px;height:1px;background:#ffffff"></div>
<div style="left:1584px;top:102px;width:1px;height:17px;background:#ffffff"></div>
<div style="left:1586px;top:103.84px;font-size:12px;line-height:14px;color:#000;white-space:nowrap;letter-spacing:-0.5px;">Всего</div>
<div style="left:1673px;top:102px;width:88px;height:17px;background:#f2c9a1"></div>
<div style="left:1673px;top:102px;width:88px;height:1px;background:#ffffff"></div>
<div style="left:1673px;top:102px;width:1px;height:17px;background:#ffffff"></div>
<div style="left:1675px;top:103.84px;font-size:12px;line-height:14px;color:#000;white-space:nowrap;letter-spacing:-0.5px;">ПЗ</div>
<div style="left:15px;top:83px;width:1px;height:37px;background:#808080"></div>
<div style="left:47px;top:83px;width:1px;height:37px;background:#808080"></div>
<div style="left:83px;top:83px;width:1px;height:37px;background:#808080"></div>
<div style="left:121px;top:83px;width:1px;height:37px;background:#808080"></div>
<div style="left:170px;top:83px;width:1px;height:37px;background:#808080"></div>
<div style="left:318px;top:83px;width:1px;height:37px;background:#808080"></div>
<div style="left:549px;top:83px;width:1px;height:37px;background:#808080"></div>
<div style="left:616px;top:83px;width:1px;height:37px;background:#808080"></div>
<div style="left:785px;top:83px;width:1px;height:19px;background:#808080"></div>
<div style="left:697px;top:101px;width:1px;height:19px;background:#808080"></div>
<div style="left:785px;top:101px;width:1px;height:19px;background:#808080"></div>
<div style="left:874px;top:101px;width:1px;height:19px;background:#808080"></div>
<div style="left:967px;top:101px;width:1px;height:19px;background:#808080"></div>
<div style="left:1033px;top:101px;width:1px;height:19px;background:#808080"></div>
<div style="left:1099px;top:101px;width:1px;height:19px;background:#808080"></div>
<div style="left:1165px;top:101px;width:1px;height:19px;background:#808080"></div>
<div style="left:1253px;top:101px;width:1px;height:19px;background:#808080"></div>
<div style="left:1319px;top:101px;width:1px;height:19px;background:#808080"></div>
<div style="left:1385px;top:101px;width:1px;height:19px;background:#808080"></div>
<div style="left:1451px;top:101px;width:1px;height:19px;background:#808080"></div>
<div style="left:1517px;top:101px;width:1px;height:19px;background:#808080"></div>
<div style="left:1583px;top:101px;width:1px;height:19px;background:#808080"></div>
<div style="left:1672px;top:101px;width:1px;height:19px;background:#808080"></div>
<div style="left:1761px;top:101px;width:1px;height:19px;background:#808080"></div>
<div style="left:616px;top:101px;width:1145px;height:1px;background:#808080"></div>
<div style="left:3px;top:119px;width:1737px;height:1px;background:#808080"></div>
<div style="left:19px;top:95.34px;font-size:12px;line-height:14px;color:#000;white-space:nowrap;letter-spacing:-0.5px;">Тип</div>
<div style="left:50.5px;top:95.34px;font-size:12px;line-height:14px;color:#000;white-space:nowrap;letter-spacing:-0.5px;">Утвер</div>
<div style="left:86.5px;top:95.34px;font-size:12px;line-height:14px;color:#000;white-space:nowrap;font-weight:700;letter-spacing:-0.5px;">№п/п</div>
<div style="left:124.5px;top:87.84px;font-size:12px;line-height:14px;color:#000;white-space:nowrap;letter-spacing:-0.5px;">Связь с</div>
<div style="left:124.5px;top:101.34px;font-size:12px;line-height:14px;color:#000;white-space:nowrap;letter-spacing:-0.5px;">ВОР</div>
<div style="left:173.5px;top:95.34px;font-size:12px;line-height:14px;color:#000;white-space:nowrap;letter-spacing:-0.5px;">Обоснование</div>
<div style="left:321px;top:95.34px;font-size:12px;line-height:14px;color:#000;white-space:nowrap;letter-spacing:-0.5px;">Наименование</div>
<div style="left:552px;top:88.14px;font-size:12px;line-height:14px;color:#000;white-space:nowrap;letter-spacing:-0.5px;">Ед.изм.</div>
<div style="left:552px;top:101.14px;font-size:12px;line-height:14px;color:#000;white-space:nowrap;letter-spacing:-0.5px;">(краткая)</div>
<div style="left:619px;top:85.54px;font-size:12px;line-height:14px;color:#000;white-space:nowrap;letter-spacing:-0.5px;">Количество</div>
<div style="left:788px;top:85.54px;font-size:12px;line-height:14px;color:#000;white-space:nowrap;letter-spacing:-0.5px;">Уровень цен</div>
<div style="left:4px;top:120px;width:11px;height:29px;background:#f0f0f0"></div>
<div style="left:4px;top:120px;width:11px;height:1px;background:#ffffff"></div>
<div style="left:4px;top:120px;width:1px;height:29px;background:#ffffff"></div>
<div style="left:16px;top:120px;width:1724px;height:29px;background:#e9e9fb"></div>
<div style="left:16px;top:120px;width:31px;height:1px;background:#ffffff"></div>
<div style="left:16px;top:120px;width:1px;height:29px;background:#ffffff"></div>
<div style="left:48px;top:120px;width:35px;height:1px;background:#ffffff"></div>
<div style="left:48px;top:120px;width:1px;height:29px;background:#ffffff"></div>
<div style="left:84px;top:120px;width:37px;height:1px;background:#ffffff"></div>
<div style="left:84px;top:120px;width:1px;height:29px;background:#ffffff"></div>
<div style="left:122px;top:120px;width:48px;height:1px;background:#ffffff"></div>
<div style="left:122px;top:120px;width:1px;height:29px;background:#ffffff"></div>
<div style="left:60px;top:129px;width:11px;height:11px;background:#fff;border:1px solid #8a8a8a"></div>
<div style="left:87px;width:34px;top:122.34px;height:16px;overflow:hidden;font-size:12px;line-height:13px;color:#0000ff;white-space:nowrap;letter-spacing:-0.5px;">ЛС1</div>
<div style="left:173px;width:145px;top:120.94px;height:16px;overflow:hidden;font-size:12px;line-height:13px;color:#0000ff;white-space:nowrap;font-weight:700;">ЛС-01-1252</div>
<svg style="position:absolute;left:285px;top:118px" width="36" height="26" viewBox="0 0 36 26"><defs><linearGradient id="bg1" x1="0" y1="1" x2="1" y2="0"><stop offset="0" stop-color="#30c060"/><stop offset="1" stop-color="#70e890"/></linearGradient></defs><path d="M9 16.5L24 22.5L32 9.5V3L21 14.5Z" fill="#fff"/><path d="M9 16.5L24 22.5L32 9.5" stroke="#4a7ab8" stroke-width="1" stroke-dasharray="1.5 1" fill="none"/><path d="M9 16.5V18.5L24 24" stroke="#3a7a6a" stroke-width="1" stroke-dasharray="1.5 1" fill="none"/><path d="M9 16.5L20.5 5.5L32 3L21 14.5Z" fill="url(#bg1)" stroke="#30a050" stroke-width="0.6"/><path d="M18 16.5L20.5 15M19.5 18.5L22 16.5M23 18L25 16.5" stroke="#000" stroke-width="1.1"/></svg>
<div style="left:321px;width:228px;top:122.82px;height:16px;overflow:hidden;font-size:13.5px;line-height:13px;color:#0000ff;white-space:nowrap;font-weight:700;">Подготовительные работы</div>
<div style="left:4px;top:149px;width:167px;height:1px;background:#808080"></div>
<div style="left:171px;top:149px;width:1569px;height:1px;background:#c0c0c0"></div>
<div style="left:4px;top:150px;width:11px;height:29px;background:#f0f0f0"></div>
<div style="left:4px;top:150px;width:11px;height:1px;background:#ffffff"></div>
<div style="left:4px;top:150px;width:1px;height:29px;background:#ffffff"></div>
<div style="left:16px;top:150px;width:1724px;height:29px;background:#f0f0fc"></div>
<div style="left:16px;top:150px;width:31px;height:1px;background:#ffffff"></div>
<div style="left:16px;top:150px;width:1px;height:29px;background:#ffffff"></div>
<div style="left:48px;top:150px;width:35px;height:1px;background:#ffffff"></div>
<div style="left:48px;top:150px;width:1px;height:29px;background:#ffffff"></div>
<div style="left:84px;top:150px;width:37px;height:1px;background:#ffffff"></div>
<div style="left:84px;top:150px;width:1px;height:29px;background:#ffffff"></div>
<div style="left:122px;top:150px;width:48px;height:1px;background:#ffffff"></div>
<div style="left:122px;top:150px;width:1px;height:29px;background:#ffffff"></div>
<div style="left:60px;top:159px;width:11px;height:11px;background:#fff;border:1px solid #8a8a8a"></div>
<div style="left:87px;width:34px;top:152.34px;height:16px;overflow:hidden;font-size:12px;line-height:13px;color:#0000ff;white-space:nowrap;letter-spacing:-0.5px;">ЛС1.Р1</div>
<div style="left:173px;width:145px;top:151.12px;height:16px;overflow:hidden;font-size:11.5px;line-height:13px;color:#0000ff;white-space:nowrap;font-weight:700;">Новый раздел</div>
<svg style="position:absolute;left:285px;top:148px" width="36" height="31" viewBox="0 0 36 31"><defs><linearGradient id="pg1" x1="0" y1="0" x2="0" y2="1"><stop offset="0" stop-color="#f0fff0"/><stop offset="1" stop-color="#70e080"/></linearGradient><linearGradient id="pg2" x1="0" y1="0" x2="0" y2="1"><stop offset="0" stop-color="#fffce0"/><stop offset="1" stop-color="#f8f080"/></linearGradient></defs><rect x="16.5" y="3.5" width="15.5" height="20" fill="url(#pg2)" stroke="#b0b0a0" stroke-width="0.8"/><path d="M19 7.5H30M19 9.5H30M19 11.5H30M19 13.5H30M19 15.5H30M19 17.5H30M19 19.5H30" stroke="#c8b860" stroke-width="0.8"/><path d="M9.5 5.5H18.5L25 12V24.5H9.5Z" fill="url(#pg1)" stroke="#808080" stroke-width="1"/><path d="M18.5 5.5V12H25" fill="#e8fce8" stroke="#808080" stroke-width="1"/><rect x="15.5" y="15" width="8" height="8" fill="#fff" stroke="#888" stroke-width="1"/><text x="19.5" y="21.8" font-size="7.5" font-weight="bold" font-family="Liberation Sans" text-anchor="middle" fill="#000">P</text></svg>
<div style="left:337.5px;width:211.5px;top:152.67px;height:16px;overflow:hidden;font-size:12.5px;line-height:13px;color:#0000ff;white-space:nowrap;font-weight:700;">Раздел 1</div>
<div style="left:4px;top:179px;width:167px;height:1px;background:#808080"></div>
<div style="left:171px;top:179px;width:1569px;height:1px;background:#c0c0c0"></div>
<div style="left:4px;top:180px;width:11px;height:29px;background:#f0f0f0"></div>
<div style="left:4px;top:180px;width:11px;height:1px;background:#ffffff"></div>
<div style="left:4px;top:180px;width:1px;height:29px;background:#ffffff"></div>
<div style="left:16px;top:180px;width:1724px;height:29px;background:#fff"></div>
<div style="left:16px;top:180px;width:31px;height:1px;background:#ffffff"></div>
<div style="left:16px;top:180px;width:1px;height:29px;background:#ffffff"></div>
<div style="left:48px;top:180px;width:35px;height:1px;background:#ffffff"></div>
<div style="left:48px;top:180px;width:1px;height:29px;background:#ffffff"></div>
<div style="left:84px;top:180px;width:37px;height:1px;background:#ffffff"></div>
<div style="left:84px;top:180px;width:1px;height:29px;background:#ffffff"></div>
<div style="left:122px;top:180px;width:48px;height:1px;background:#ffffff"></div>
<div style="left:122px;top:180px;width:1px;height:29px;background:#ffffff"></div>
<div style="left:60px;top:189px;width:11px;height:11px;background:#fff;border:1px solid #8a8a8a"></div>
<div style="left:87px;width:34px;top:182.34px;height:16px;overflow:hidden;font-size:12px;line-height:13px;color:#000;white-space:nowrap;letter-spacing:-0.5px;">1</div>
<div style="left:173px;width:145px;top:182.34px;height:16px;overflow:hidden;font-size:12px;line-height:13px;color:#000;white-space:nowrap;letter-spacing:-0.5px;">10-01-001-01</div>
<svg style="position:absolute;left:303px;top:194px" width="14" height="14" viewBox="0 0 14 14"><rect x="1.6" y="0.9" width="4.8" height="12" rx="2.2" fill="none" stroke="#484848" stroke-width="1.4"/><path d="M3.5 3V10" stroke="#484848" stroke-width="0.9"/><rect x="7" y="1" width="6.2" height="6" rx="0.6" fill="#16a016"/><path d="M8.2 3.8L9.6 5.2L12 2.6" stroke="#fff" stroke-width="1" fill="none"/></svg>
<div style="left:321px;width:228px;top:182.34px;height:16px;overflow:hidden;font-size:12px;line-height:13px;color:#000;white-space:nowrap;letter-spacing:-0.5px;">Укрупнительная сборка и установка</div>
<div style="left:321px;width:228px;top:195.34px;height:16px;overflow:hidden;font-size:12px;line-height:13px;color:#000;white-space:nowrap;letter-spacing:-0.5px;">конструкций арок и ферм сегментных с</div>
<div style="left:552px;width:64px;top:182.34px;height:16px;overflow:hidden;font-size:12px;line-height:13px;color:#000;white-space:nowrap;letter-spacing:-0.5px;">ШТ</div>
<div style="left:619px;width:78px;top:182.34px;height:16px;overflow:hidden;font-size:12px;line-height:13px;color:#000;white-space:nowrap;letter-spacing:-0.5px;">4</div>
<div style="left:700px;width:85px;top:182.34px;height:16px;overflow:hidden;font-size:12px;line-height:13px;color:#000;white-space:nowrap;letter-spacing:-0.5px;"></div>
<div style="left:786px;width:86.5px;top:182.34px;height:16px;overflow:hidden;font-size:12px;line-height:13px;color:#000;white-space:nowrap;letter-spacing:-0.5px;text-align:right">828 534,02</div>
<div style="left:875px;width:90.5px;top:182.34px;height:16px;overflow:hidden;font-size:12px;line-height:13px;color:#000;white-space:nowrap;letter-spacing:-0.5px;text-align:right">664 056,58</div>
<div style="left:968px;width:63.5px;top:182.34px;height:16px;overflow:hidden;font-size:12px;line-height:13px;color:#000;white-space:nowrap;letter-spacing:-0.5px;text-align:right">0</div>
<div style="left:1034px;width:63.5px;top:182.34px;height:16px;overflow:hidden;font-size:12px;line-height:13px;color:#000;white-space:nowrap;letter-spacing:-0.5px;text-align:right">122 340,62</div>
<div style="left:1100px;width:63.5px;top:182.34px;height:16px;overflow:hidden;font-size:12px;line-height:13px;color:#000;white-space:nowrap;letter-spacing:-0.5px;text-align:right">98 490,27</div>
<div style="left:1166px;width:85.5px;top:182.34px;height:16px;overflow:hidden;font-size:12px;line-height:13px;color:#000;white-space:nowrap;letter-spacing:-0.5px;text-align:right">443 225,69</div>
<div style="left:1254px;width:63.5px;top:182.34px;height:16px;overflow:hidden;font-size:12px;line-height:13px;color:#000;white-space:nowrap;letter-spacing:-0.5px;text-align:right">0</div>
<div style="left:1320px;width:63.5px;top:182.34px;height:16px;overflow:hidden;font-size:12px;line-height:13px;color:#000;white-space:nowrap;letter-spacing:-0.5px;text-align:right">106 369,49</div>
<div style="left:1386px;width:63.5px;top:182.34px;height:16px;overflow:hidden;font-size:12px;line-height:13px;color:#000;white-space:nowrap;letter-spacing:-0.5px;text-align:right">54 169,65</div>
<div style="left:1452px;width:63.5px;top:182.34px;height:16px;overflow:hidden;font-size:12px;line-height:13px;color:#000;white-space:nowrap;letter-spacing:-0.5px;text-align:right">0</div>
<div style="left:1518px;width:63.5px;top:182.34px;height:16px;overflow:hidden;font-size:12px;line-height:13px;color:#000;white-space:nowrap;letter-spacing:-0.5px;text-align:right">4,44</div>
<div style="left:1584px;width:86.5px;top:182.34px;height:16px;overflow:hidden;font-size:12px;line-height:13px;color:#000;white-space:nowrap;letter-spacing:-0.5px;text-align:right">5 076 163,35</div>
<div style="left:1673px;width:77.5px;top:182.34px;height:16px;overflow:hidden;font-size:12px;line-height:13px;color:#000;white-space:nowrap;letter-spacing:-0.5px;text-align:right">5 076 163,35</div>
<div style="left:4px;top:209px;width:167px;height:1px;background:#808080"></div>
<div style="left:171px;top:209px;width:1569px;height:1px;background:#c0c0c0"></div>
<div style="left:4px;top:210px;width:11px;height:29px;background:#f0f0f0"></div>
<div style="left:4px;top:210px;width:11px;height:1px;background:#ffffff"></div>
<div style="left:4px;top:210px;width:1px;height:29px;background:#ffffff"></div>
<div style="left:16px;top:210px;width:1724px;height:29px;background:#fde9e9"></div>
<div style="left:16px;top:210px;width:31px;height:1px;background:#ffffff"></div>
<div style="left:16px;top:210px;width:1px;height:29px;background:#ffffff"></div>
<div style="left:48px;top:210px;width:35px;height:1px;background:#ffffff"></div>
<div style="left:48px;top:210px;width:1px;height:29px;background:#ffffff"></div>
<div style="left:84px;top:210px;width:37px;height:1px;background:#ffffff"></div>
<div style="left:84px;top:210px;width:1px;height:29px;background:#ffffff"></div>
<div style="left:122px;top:210px;width:48px;height:1px;background:#ffffff"></div>
<div style="left:122px;top:210px;width:1px;height:29px;background:#ffffff"></div>
<svg style="position:absolute;left:23px;top:221px" width="16" height="8" viewBox="0 0 16 8"><rect x="0.25" y="4.25" width="4.8" height="2.6" rx="1.3" fill="#e86a08" stroke="#a84000" stroke-width="0.5"/><rect x="0.8" y="4.5" width="3.6999999999999997" height="1.2" rx="0.6" fill="#ff8c1a"/><rect x="0.5" y="6.2" width="4.3" height="0.8" fill="#b04800"/><rect x="5.85" y="4.25" width="4.4" height="2.6" rx="1.3" fill="#e86a08" stroke="#a84000" stroke-width="0.5"/><rect x="6.3999999999999995" y="4.5" width="3.3000000000000003" height="1.2" rx="0.6" fill="#ff8c1a"/><rect x="6.1" y="6.2" width="3.9000000000000004" height="0.8" fill="#b04800"/><rect x="11.05" y="4.25" width="4.7" height="2.6" rx="1.3" fill="#e86a08" stroke="#a84000" stroke-width="0.5"/><rect x="11.600000000000001" y="4.5" width="3.6" height="1.2" rx="0.6" fill="#ff8c1a"/><rect x="11.3" y="6.2" width="4.2" height="0.8" fill="#b04800"/><rect x="2.25" y="2.25" width="5.0" height="2.6" rx="1.3" fill="#e86a08" stroke="#a84000" stroke-width="0.5"/><rect x="2.8" y="2.5" width="3.9" height="1.2" rx="0.6" fill="#ff8c1a"/><rect x="2.5" y="4.2" width="4.5" height="0.8" fill="#b04800"/><rect x="8.05" y="2.25" width="4.7" height="2.6" rx="1.3" fill="#e86a08" stroke="#a84000" stroke-width="0.5"/><rect x="8.6" y="2.5" width="3.6" height="1.2" rx="0.6" fill="#ff8c1a"/><rect x="8.3" y="4.2" width="4.2" height="0.8" fill="#b04800"/><rect x="5.45" y="0.25" width="5.3" height="2.6" rx="1.3" fill="#e86a08" stroke="#a84000" stroke-width="0.5"/><rect x="6.0" y="0.5" width="4.199999999999999" height="1.2" rx="0.6" fill="#ff8c1a"/><rect x="5.7" y="2.2" width="4.8" height="0.8" fill="#b04800"/></svg>
<div style="left:87px;width:34px;top:212.34px;height:16px;overflow:hidden;font-size:12px;line-height:13px;color:#000;white-space:nowrap;letter-spacing:-0.5px;">1,1</div>
<div style="left:173px;width:145px;top:212.34px;height:16px;overflow:hidden;font-size:12px;line-height:13px;color:#000;white-space:nowrap;letter-spacing:-0.5px;">07.2.07.13-0221</div>
<svg style="position:absolute;left:303px;top:224px" width="14" height="14" viewBox="0 0 14 14"><rect x="1.6" y="0.9" width="4.8" height="12" rx="2.2" fill="none" stroke="#484848" stroke-width="1.4"/><path d="M3.5 3V10" stroke="#484848" stroke-width="0.9"/><rect x="7" y="1" width="6.2" height="6" rx="0.6" fill="#16a016"/><path d="M8.2 3.8L9.6 5.2L12 2.6" stroke="#fff" stroke-width="1" fill="none"/></svg>
<div style="left:321px;width:228px;top:212.34px;height:16px;overflow:hidden;font-size:12px;line-height:13px;color:#000;white-space:nowrap;letter-spacing:-0.5px;">Хомуты стальные</div>
<div style="left:552px;width:64px;top:212.34px;height:16px;overflow:hidden;font-size:12px;line-height:13px;color:#000;white-space:nowrap;letter-spacing:-0.5px;">кг</div>
<div style="left:619px;width:78px;top:212.34px;height:16px;overflow:hidden;font-size:12px;line-height:13px;color:#000;white-space:nowrap;letter-spacing:-0.5px;">5</div>
<div style="left:700px;width:85px;top:212.34px;height:16px;overflow:hidden;font-size:12px;line-height:13px;color:#000;white-space:nowrap;letter-spacing:-0.5px;">1,25</div>
<div style="left:786px;width:46.5px;top:212.34px;height:16px;overflow:hidden;font-size:12px;line-height:13px;color:#000;white-space:nowrap;letter-spacing:-0.5px;text-align:right">-</div>
<div style="left:875px;width:90.5px;top:212.34px;height:16px;overflow:hidden;font-size:12px;line-height:13px;color:#000;white-space:nowrap;letter-spacing:-0.5px;text-align:right">1 735,2</div>
<div style="left:968px;width:63.5px;top:212.34px;height:16px;overflow:hidden;font-size:12px;line-height:13px;color:#000;white-space:nowrap;letter-spacing:-0.5px;text-align:right">0</div>
<div style="left:1034px;width:63.5px;top:212.34px;height:16px;overflow:hidden;font-size:12px;line-height:13px;color:#000;white-space:nowrap;letter-spacing:-0.5px;text-align:right">0</div>
<div style="left:1100px;width:63.5px;top:212.34px;height:16px;overflow:hidden;font-size:12px;line-height:13px;color:#000;white-space:nowrap;letter-spacing:-0.5px;text-align:right">0</div>
<div style="left:1166px;width:85.5px;top:212.34px;height:16px;overflow:hidden;font-size:12px;line-height:13px;color:#000;white-space:nowrap;letter-spacing:-0.5px;text-align:right">1 735,2</div>
<div style="left:1254px;width:63.5px;top:212.34px;height:16px;overflow:hidden;font-size:12px;line-height:13px;color:#000;white-space:nowrap;letter-spacing:-0.5px;text-align:right">0</div>
<div style="left:1320px;width:63.5px;top:212.34px;height:16px;overflow:hidden;font-size:12px;line-height:13px;color:#000;white-space:nowrap;letter-spacing:-0.5px;text-align:right">0</div>
<div style="left:1386px;width:63.5px;top:212.34px;height:16px;overflow:hidden;font-size:12px;line-height:13px;color:#000;white-space:nowrap;letter-spacing:-0.5px;text-align:right">0</div>
<div style="left:1452px;width:63.5px;top:212.34px;height:16px;overflow:hidden;font-size:12px;line-height:13px;color:#000;white-space:nowrap;letter-spacing:-0.5px;text-align:right">0</div>
<div style="left:1518px;width:63.5px;top:212.34px;height:16px;overflow:hidden;font-size:12px;line-height:13px;color:#000;white-space:nowrap;letter-spacing:-0.5px;text-align:right">0</div>
<div style="left:1584px;width:86.5px;top:212.34px;height:16px;overflow:hidden;font-size:12px;line-height:13px;color:#000;white-space:nowrap;letter-spacing:-0.5px;text-align:right">44,55</div>
<div style="left:1673px;width:77.5px;top:212.34px;height:16px;overflow:hidden;font-size:12px;line-height:13px;color:#000;white-space:nowrap;letter-spacing:-0.5px;text-align:right">44,55</div>
<div style="left:4px;top:239px;width:167px;height:1px;background:#808080"></div>
<div style="left:171px;top:239px;width:1569px;height:1px;background:#c0c0c0"></div>
<div style="left:4px;top:240px;width:11px;height:29px;background:#f0f0f0"></div>
<div style="left:4px;top:240px;width:11px;height:1px;background:#ffffff"></div>
<div style="left:4px;top:240px;width:1px;height:29px;background:#ffffff"></div>
<div style="left:16px;top:240px;width:1724px;height:29px;background:#fde9e9"></div>
<div style="left:16px;top:240px;width:31px;height:1px;background:#ffffff"></div>
<div style="left:16px;top:240px;width:1px;height:29px;background:#ffffff"></div>
<div style="left:48px;top:240px;width:35px;height:1px;background:#ffffff"></div>
<div style="left:48px;top:240px;width:1px;height:29px;background:#ffffff"></div>
<div style="left:84px;top:240px;width:37px;height:1px;background:#ffffff"></div>
<div style="left:84px;top:240px;width:1px;height:29px;background:#ffffff"></div>
<div style="left:122px;top:240px;width:48px;height:1px;background:#ffffff"></div>
<div style="left:122px;top:240px;width:1px;height:29px;background:#ffffff"></div>
<svg style="position:absolute;left:23px;top:251px" width="16" height="8" viewBox="0 0 16 8"><rect x="0.25" y="4.25" width="4.8" height="2.6" rx="1.3" fill="#e86a08" stroke="#a84000" stroke-width="0.5"/><rect x="0.8" y="4.5" width="3.6999999999999997" height="1.2" rx="0.6" fill="#ff8c1a"/><rect x="0.5" y="6.2" width="4.3" height="0.8" fill="#b04800"/><rect x="5.85" y="4.25" width="4.4" height="2.6" rx="1.3" fill="#e86a08" stroke="#a84000" stroke-width="0.5"/><rect x="6.3999999999999995" y="4.5" width="3.3000000000000003" height="1.2" rx="0.6" fill="#ff8c1a"/><rect x="6.1" y="6.2" width="3.9000000000000004" height="0.8" fill="#b04800"/><rect x="11.05" y="4.25" width="4.7" height="2.6" rx="1.3" fill="#e86a08" stroke="#a84000" stroke-width="0.5"/><rect x="11.600000000000001" y="4.5" width="3.6" height="1.2" rx="0.6" fill="#ff8c1a"/><rect x="11.3" y="6.2" width="4.2" height="0.8" fill="#b04800"/><rect x="2.25" y="2.25" width="5.0" height="2.6" rx="1.3" fill="#e86a08" stroke="#a84000" stroke-width="0.5"/><rect x="2.8" y="2.5" width="3.9" height="1.2" rx="0.6" fill="#ff8c1a"/><rect x="2.5" y="4.2" width="4.5" height="0.8" fill="#b04800"/><rect x="8.05" y="2.25" width="4.7" height="2.6" rx="1.3" fill="#e86a08" stroke="#a84000" stroke-width="0.5"/><rect x="8.6" y="2.5" width="3.6" height="1.2" rx="0.6" fill="#ff8c1a"/><rect x="8.3" y="4.2" width="4.2" height="0.8" fill="#b04800"/><rect x="5.45" y="0.25" width="5.3" height="2.6" rx="1.3" fill="#e86a08" stroke="#a84000" stroke-width="0.5"/><rect x="6.0" y="0.5" width="4.199999999999999" height="1.2" rx="0.6" fill="#ff8c1a"/><rect x="5.7" y="2.2" width="4.8" height="0.8" fill="#b04800"/></svg>
<div style="left:87px;width:34px;top:242.34px;height:16px;overflow:hidden;font-size:12px;line-height:13px;color:#000;white-space:nowrap;letter-spacing:-0.5px;">1,2</div>
<div style="left:173px;width:145px;top:242.34px;height:16px;overflow:hidden;font-size:12px;line-height:13px;color:#000;white-space:nowrap;letter-spacing:-0.5px;">11.2.06.02-0050</div>
<div style="left:321px;width:228px;top:242.34px;height:16px;overflow:hidden;font-size:12px;line-height:13px;color:#000;white-space:nowrap;letter-spacing:-0.5px;">Балка опалубки фанерно-деревянная</div>
<div style="left:321px;width:228px;top:255.34px;height:16px;overflow:hidden;font-size:12px;line-height:13px;color:#000;white-space:nowrap;letter-spacing:-0.5px;">двутавровая, клееная, окрашенная, высота</div>
<div style="left:552px;width:64px;top:242.34px;height:16px;overflow:hidden;font-size:12px;line-height:13px;color:#000;white-space:nowrap;letter-spacing:-0.5px;">м</div>
<div style="left:619px;width:78px;top:242.34px;height:16px;overflow:hidden;font-size:12px;line-height:13px;color:#000;white-space:nowrap;letter-spacing:-0.5px;">5</div>
<div style="left:700px;width:85px;top:242.34px;height:16px;overflow:hidden;font-size:12px;line-height:13px;color:#000;white-space:nowrap;letter-spacing:-0.5px;">1,25</div>
<div style="left:786px;width:46.5px;top:242.34px;height:16px;overflow:hidden;font-size:12px;line-height:13px;color:#000;white-space:nowrap;letter-spacing:-0.5px;text-align:right">-</div>
<div style="left:875px;width:90.5px;top:242.34px;height:16px;overflow:hidden;font-size:12px;line-height:13px;color:#000;white-space:nowrap;letter-spacing:-0.5px;text-align:right">2 203,1</div>
<div style="left:968px;width:63.5px;top:242.34px;height:16px;overflow:hidden;font-size:12px;line-height:13px;color:#000;white-space:nowrap;letter-spacing:-0.5px;text-align:right">0</div>
<div style="left:1034px;width:63.5px;top:242.34px;height:16px;overflow:hidden;font-size:12px;line-height:13px;color:#000;white-space:nowrap;letter-spacing:-0.5px;text-align:right">0</div>
<div style="left:1100px;width:63.5px;top:242.34px;height:16px;overflow:hidden;font-size:12px;line-height:13px;color:#000;white-space:nowrap;letter-spacing:-0.5px;text-align:right">0</div>
<div style="left:1166px;width:85.5px;top:242.34px;height:16px;overflow:hidden;font-size:12px;line-height:13px;color:#000;white-space:nowrap;letter-spacing:-0.5px;text-align:right">2 203,1</div>
<div style="left:1254px;width:63.5px;top:242.34px;height:16px;overflow:hidden;font-size:12px;line-height:13px;color:#000;white-space:nowrap;letter-spacing:-0.5px;text-align:right">0</div>
<div style="left:1320px;width:63.5px;top:242.34px;height:16px;overflow:hidden;font-size:12px;line-height:13px;color:#000;white-space:nowrap;letter-spacing:-0.5px;text-align:right">0</div>
<div style="left:1386px;width:63.5px;top:242.34px;height:16px;overflow:hidden;font-size:12px;line-height:13px;color:#000;white-space:nowrap;letter-spacing:-0.5px;text-align:right">0</div>
<div style="left:1452px;width:63.5px;top:242.34px;height:16px;overflow:hidden;font-size:12px;line-height:13px;color:#000;white-space:nowrap;letter-spacing:-0.5px;text-align:right">0</div>
<div style="left:1518px;width:63.5px;top:242.34px;height:16px;overflow:hidden;font-size:12px;line-height:13px;color:#000;white-space:nowrap;letter-spacing:-0.5px;text-align:right">0</div>
<div style="left:1584px;width:86.5px;top:242.34px;height:16px;overflow:hidden;font-size:12px;line-height:13px;color:#000;white-space:nowrap;letter-spacing:-0.5px;text-align:right">440,62</div>
<div style="left:1673px;width:77.5px;top:242.34px;height:16px;overflow:hidden;font-size:12px;line-height:13px;color:#000;white-space:nowrap;letter-spacing:-0.5px;text-align:right">440,62</div>
<div style="left:4px;top:269px;width:167px;height:1px;background:#808080"></div>
<div style="left:171px;top:269px;width:1569px;height:1px;background:#c0c0c0"></div>
<div style="left:4px;top:270px;width:11px;height:29px;background:#f0f0f0"></div>
<div style="left:4px;top:270px;width:11px;height:1px;background:#ffffff"></div>
<div style="left:4px;top:270px;width:1px;height:29px;background:#ffffff"></div>
<div style="left:16px;top:270px;width:1724px;height:29px;background:#fff"></div>
<div style="left:16px;top:270px;width:31px;height:1px;background:#ffffff"></div>
<div style="left:16px;top:270px;width:1px;height:29px;background:#ffffff"></div>
<div style="left:48px;top:270px;width:35px;height:1px;background:#ffffff"></div>
<div style="left:48px;top:270px;width:1px;height:29px;background:#ffffff"></div>
<div style="left:84px;top:270px;width:37px;height:1px;background:#ffffff"></div>
<div style="left:84px;top:270px;width:1px;height:29px;background:#ffffff"></div>
<div style="left:122px;top:270px;width:48px;height:1px;background:#ffffff"></div>
<div style="left:122px;top:270px;width:1px;height:29px;background:#ffffff"></div>
<div style="left:60px;top:279px;width:11px;height:11px;background:#fff;border:1px solid #8a8a8a"></div>
<div style="left:87px;width:34px;top:272.34px;height:16px;overflow:hidden;font-size:12px;line-height:13px;color:#000;white-space:nowrap;letter-spacing:-0.5px;">2</div>
<div style="left:173px;width:145px;top:272.34px;height:16px;overflow:hidden;font-size:12px;line-height:13px;color:#000;white-space:nowrap;letter-spacing:-0.5px;">12-01-001-01</div>
<svg style="position:absolute;left:303px;top:284px" width="14" height="14" viewBox="0 0 14 14"><rect x="1.6" y="0.9" width="4.8" height="12" rx="2.2" fill="none" stroke="#484848" stroke-width="1.4"/><path d="M3.5 3V10" stroke="#484848" stroke-width="0.9"/><rect x="7" y="1" width="6.2" height="6" rx="0.6" fill="#16a016"/><path d="M8.2 3.8L9.6 5.2L12 2.6" stroke="#fff" stroke-width="1" fill="none"/></svg>
<div style="left:321px;width:228px;top:272.34px;height:16px;overflow:hidden;font-size:12px;line-height:13px;color:#000;white-space:nowrap;letter-spacing:-0.5px;">Устройство кровель скатных из трех слоев</div>
<div style="left:321px;width:228px;top:285.34px;height:16px;overflow:hidden;font-size:12px;line-height:13px;color:#000;white-space:nowrap;letter-spacing:-0.5px;">кровельных рулонных материалов: на</div>
<div style="left:552px;width:64px;top:272.34px;height:16px;overflow:hidden;font-size:12px;line-height:13px;color:#000;white-space:nowrap;letter-spacing:-0.5px;">100 м2</div>
<div style="left:619px;width:78px;top:272.34px;height:16px;overflow:hidden;font-size:12px;line-height:13px;color:#000;white-space:nowrap;letter-spacing:-0.5px;">0,04</div>
<div style="left:700px;width:85px;top:272.34px;height:16px;overflow:hidden;font-size:12px;line-height:13px;color:#000;white-space:nowrap;letter-spacing:-0.5px;"></div>
<svg style="position:absolute;left:690px;top:270px" width="7" height="7" viewBox="0 0 7 7"><path d="M0 0H7V7Z" fill="#1aa01a"/></svg>
<div style="left:786px;width:86.5px;top:272.34px;height:16px;overflow:hidden;font-size:12px;line-height:13px;color:#000;white-space:nowrap;letter-spacing:-0.5px;text-align:right">1 393,51</div>
<div style="left:875px;width:90.5px;top:272.34px;height:16px;overflow:hidden;font-size:12px;line-height:13px;color:#000;white-space:nowrap;letter-spacing:-0.5px;text-align:right">717,29</div>
<div style="left:968px;width:63.5px;top:272.34px;height:16px;overflow:hidden;font-size:12px;line-height:13px;color:#000;white-space:nowrap;letter-spacing:-0.5px;text-align:right">0</div>
<div style="left:1034px;width:63.5px;top:272.34px;height:16px;overflow:hidden;font-size:12px;line-height:13px;color:#000;white-space:nowrap;letter-spacing:-0.5px;text-align:right">309,93</div>
<div style="left:1100px;width:63.5px;top:272.34px;height:16px;overflow:hidden;font-size:12px;line-height:13px;color:#000;white-space:nowrap;letter-spacing:-0.5px;text-align:right">407,36</div>
<div style="left:1166px;width:85.5px;top:272.34px;height:16px;overflow:hidden;font-size:12px;line-height:13px;color:#000;white-space:nowrap;letter-spacing:-0.5px;text-align:right">0</div>
<div style="left:1254px;width:63.5px;top:272.34px;height:16px;overflow:hidden;font-size:12px;line-height:13px;color:#000;white-space:nowrap;letter-spacing:-0.5px;text-align:right">0</div>
<div style="left:1320px;width:63.5px;top:272.34px;height:16px;overflow:hidden;font-size:12px;line-height:13px;color:#000;white-space:nowrap;letter-spacing:-0.5px;text-align:right">444,02</div>
<div style="left:1386px;width:63.5px;top:272.34px;height:16px;overflow:hidden;font-size:12px;line-height:13px;color:#000;white-space:nowrap;letter-spacing:-0.5px;text-align:right">232,2</div>
<div style="left:1452px;width:63.5px;top:272.34px;height:16px;overflow:hidden;font-size:12px;line-height:13px;color:#000;white-space:nowrap;letter-spacing:-0.5px;text-align:right">0</div>
<div style="left:1518px;width:63.5px;top:272.34px;height:16px;overflow:hidden;font-size:12px;line-height:13px;color:#000;white-space:nowrap;letter-spacing:-0.5px;text-align:right">0,0184</div>
<div style="left:1584px;width:86.5px;top:272.34px;height:16px;overflow:hidden;font-size:12px;line-height:13px;color:#000;white-space:nowrap;letter-spacing:-0.5px;text-align:right">44 131,57</div>
<div style="left:1673px;width:77.5px;top:272.34px;height:16px;overflow:hidden;font-size:12px;line-height:13px;color:#000;white-space:nowrap;letter-spacing:-0.5px;text-align:right">44 131,57</div>
<div style="left:4px;top:299px;width:167px;height:1px;background:#808080"></div>
<div style="left:171px;top:299px;width:1569px;height:1px;background:#c0c0c0"></div>
<div style="left:4px;top:300px;width:11px;height:29px;background:#f0f0f0"></div>
<div style="left:4px;top:300px;width:11px;height:1px;background:#ffffff"></div>
<div style="left:4px;top:300px;width:1px;height:29px;background:#ffffff"></div>
<div style="left:16px;top:300px;width:1724px;height:29px;background:#fde9e9"></div>
<div style="left:16px;top:300px;width:31px;height:1px;background:#ffffff"></div>
<div style="left:16px;top:300px;width:1px;height:29px;background:#ffffff"></div>
<div style="left:48px;top:300px;width:35px;height:1px;background:#ffffff"></div>
<div style="left:48px;top:300px;width:1px;height:29px;background:#ffffff"></div>
<div style="left:84px;top:300px;width:37px;height:1px;background:#ffffff"></div>
<div style="left:84px;top:300px;width:1px;height:29px;background:#ffffff"></div>
<div style="left:122px;top:300px;width:48px;height:1px;background:#ffffff"></div>
<div style="left:122px;top:300px;width:1px;height:29px;background:#ffffff"></div>
<svg style="position:absolute;left:23px;top:311px" width="16" height="8" viewBox="0 0 16 8"><rect x="0.25" y="4.25" width="4.8" height="2.6" rx="1.3" fill="#e86a08" stroke="#a84000" stroke-width="0.5"/><rect x="0.8" y="4.5" width="3.6999999999999997" height="1.2" rx="0.6" fill="#ff8c1a"/><rect x="0.5" y="6.2" width="4.3" height="0.8" fill="#b04800"/><rect x="5.85" y="4.25" width="4.4" height="2.6" rx="1.3" fill="#e86a08" stroke="#a84000" stroke-width="0.5"/><rect x="6.3999999999999995" y="4.5" width="3.3000000000000003" height="1.2" rx="0.6" fill="#ff8c1a"/><rect x="6.1" y="6.2" width="3.9000000000000004" height="0.8" fill="#b04800"/><rect x="11.05" y="4.25" width="4.7" height="2.6" rx="1.3" fill="#e86a08" stroke="#a84000" stroke-width="0.5"/><rect x="11.600000000000001" y="4.5" width="3.6" height="1.2" rx="0.6" fill="#ff8c1a"/><rect x="11.3" y="6.2" width="4.2" height="0.8" fill="#b04800"/><rect x="2.25" y="2.25" width="5.0" height="2.6" rx="1.3" fill="#e86a08" stroke="#a84000" stroke-width="0.5"/><rect x="2.8" y="2.5" width="3.9" height="1.2" rx="0.6" fill="#ff8c1a"/><rect x="2.5" y="4.2" width="4.5" height="0.8" fill="#b04800"/><rect x="8.05" y="2.25" width="4.7" height="2.6" rx="1.3" fill="#e86a08" stroke="#a84000" stroke-width="0.5"/><rect x="8.6" y="2.5" width="3.6" height="1.2" rx="0.6" fill="#ff8c1a"/><rect x="8.3" y="4.2" width="4.2" height="0.8" fill="#b04800"/><rect x="5.45" y="0.25" width="5.3" height="2.6" rx="1.3" fill="#e86a08" stroke="#a84000" stroke-width="0.5"/><rect x="6.0" y="0.5" width="4.199999999999999" height="1.2" rx="0.6" fill="#ff8c1a"/><rect x="5.7" y="2.2" width="4.8" height="0.8" fill="#b04800"/></svg>
<div style="left:87px;width:34px;top:302.34px;height:16px;overflow:hidden;font-size:12px;line-height:13px;color:#000;white-space:nowrap;letter-spacing:-0.5px;">2,1</div>
<div style="left:173px;width:145px;top:302.34px;height:16px;overflow:hidden;font-size:12px;line-height:13px;color:#000;white-space:nowrap;letter-spacing:-0.5px;">12.1.02.15</div>
<div style="left:321px;width:228px;top:302.34px;height:16px;overflow:hidden;font-size:12px;line-height:13px;color:#000;white-space:nowrap;letter-spacing:-0.5px;">Материалы рулонные кровельные для</div>
<div style="left:321px;width:228px;top:315.34px;height:16px;overflow:hidden;font-size:12px;line-height:13px;color:#000;white-space:nowrap;letter-spacing:-0.5px;">нижних слоев</div>
<div style="left:552px;width:64px;top:302.34px;height:16px;overflow:hidden;font-size:12px;line-height:13px;color:#000;white-space:nowrap;letter-spacing:-0.5px;">м2</div>
<div style="left:619px;width:78px;top:302.34px;height:16px;overflow:hidden;font-size:12px;line-height:13px;color:#000;white-space:nowrap;letter-spacing:-0.5px;">9,04</div>
<div style="left:700px;width:85px;top:302.34px;height:16px;overflow:hidden;font-size:12px;line-height:13px;color:#000;white-space:nowrap;letter-spacing:-0.5px;">226</div>
<div style="left:786px;width:46.5px;top:302.34px;height:16px;overflow:hidden;font-size:12px;line-height:13px;color:#000;white-space:nowrap;letter-spacing:-0.5px;text-align:right">-</div>
<div style="left:875px;width:90.5px;top:302.34px;height:16px;overflow:hidden;font-size:12px;line-height:13px;color:#000;white-space:nowrap;letter-spacing:-0.5px;text-align:right">0</div>
<div style="left:968px;width:63.5px;top:302.34px;height:16px;overflow:hidden;font-size:12px;line-height:13px;color:#000;white-space:nowrap;letter-spacing:-0.5px;text-align:right">0</div>
<div style="left:1034px;width:63.5px;top:302.34px;height:16px;overflow:hidden;font-size:12px;line-height:13px;color:#000;white-space:nowrap;letter-spacing:-0.5px;text-align:right">0</div>
<div style="left:1100px;width:63.5px;top:302.34px;height:16px;overflow:hidden;font-size:12px;line-height:13px;color:#000;white-space:nowrap;letter-spacing:-0.5px;text-align:right">0</div>
<div style="left:1166px;width:85.5px;top:302.34px;height:16px;overflow:hidden;font-size:12px;line-height:13px;color:#000;white-space:nowrap;letter-spacing:-0.5px;text-align:right">0</div>
<div style="left:1254px;width:63.5px;top:302.34px;height:16px;overflow:hidden;font-size:12px;line-height:13px;color:#000;white-space:nowrap;letter-spacing:-0.5px;text-align:right">0</div>
<div style="left:1320px;width:63.5px;top:302.34px;height:16px;overflow:hidden;font-size:12px;line-height:13px;color:#000;white-space:nowrap;letter-spacing:-0.5px;text-align:right">0</div>
<div style="left:1386px;width:63.5px;top:302.34px;height:16px;overflow:hidden;font-size:12px;line-height:13px;color:#000;white-space:nowrap;letter-spacing:-0.5px;text-align:right">0</div>
<div style="left:1452px;width:63.5px;top:302.34px;height:16px;overflow:hidden;font-size:12px;line-height:13px;color:#000;white-space:nowrap;letter-spacing:-0.5px;text-align:right">0</div>
<div style="left:1518px;width:63.5px;top:302.34px;height:16px;overflow:hidden;font-size:12px;line-height:13px;color:#000;white-space:nowrap;letter-spacing:-0.5px;text-align:right">0</div>
<div style="left:1584px;width:86.5px;top:302.34px;height:16px;overflow:hidden;font-size:12px;line-height:13px;color:#000;white-space:nowrap;letter-spacing:-0.5px;text-align:right">0</div>
<div style="left:4px;top:329px;width:167px;height:1px;background:#808080"></div>
<div style="left:171px;top:329px;width:1569px;height:1px;background:#c0c0c0"></div>
<div style="left:4px;top:330px;width:11px;height:29px;background:#f0f0f0"></div>
<div style="left:4px;top:330px;width:11px;height:1px;background:#ffffff"></div>
<div style="left:4px;top:330px;width:1px;height:29px;background:#ffffff"></div>
<div style="left:16px;top:330px;width:1724px;height:29px;background:#fff"></div>
<div style="left:16px;top:330px;width:31px;height:1px;background:#ffffff"></div>
<div style="left:16px;top:330px;width:1px;height:29px;background:#ffffff"></div>
<div style="left:48px;top:330px;width:35px;height:1px;background:#ffffff"></div>
<div style="left:48px;top:330px;width:1px;height:29px;background:#ffffff"></div>
<div style="left:84px;top:330px;width:37px;height:1px;background:#ffffff"></div>
<div style="left:84px;top:330px;width:1px;height:29px;background:#ffffff"></div>
<div style="left:122px;top:330px;width:48px;height:1px;background:#ffffff"></div>
<div style="left:122px;top:330px;width:1px;height:29px;background:#ffffff"></div>
<div style="left:60px;top:339px;width:11px;height:11px;background:#fff;border:1px solid #8a8a8a"></div>
<div style="left:87px;width:34px;top:332.34px;height:16px;overflow:hidden;font-size:12px;line-height:13px;color:#000;white-space:nowrap;letter-spacing:-0.5px;">3</div>
<div style="left:173px;width:145px;top:332.34px;height:16px;overflow:hidden;font-size:12px;line-height:13px;color:#000;white-space:nowrap;letter-spacing:-0.5px;">14-01-001-01</div>
<svg style="position:absolute;left:303px;top:344px" width="14" height="14" viewBox="0 0 14 14"><rect x="1.6" y="0.9" width="4.8" height="12" rx="2.2" fill="none" stroke="#484848" stroke-width="1.4"/><path d="M3.5 3V10" stroke="#484848" stroke-width="0.9"/><rect x="7" y="1" width="6.2" height="6" rx="0.6" fill="#16a016"/><path d="M8.2 3.8L9.6 5.2L12 2.6" stroke="#fff" stroke-width="1" fill="none"/></svg>
<div style="left:321px;width:228px;top:332.34px;height:16px;overflow:hidden;font-size:12px;line-height:13px;color:#000;white-space:nowrap;letter-spacing:-0.5px;">Устройство деревянного надцокольного</div>
<div style="left:321px;width:228px;top:345.34px;height:16px;overflow:hidden;font-size:12px;line-height:13px;color:#000;white-space:nowrap;letter-spacing:-0.5px;">пояса</div>
<div style="left:552px;width:64px;top:332.34px;height:16px;overflow:hidden;font-size:12px;line-height:13px;color:#000;white-space:nowrap;letter-spacing:-0.5px;">100 м</div>
<div style="left:619px;width:78px;top:332.34px;height:16px;overflow:hidden;font-size:12px;line-height:13px;color:#000;white-space:nowrap;letter-spacing:-0.5px;">0,04</div>
<div style="left:700px;width:85px;top:332.34px;height:16px;overflow:hidden;font-size:12px;line-height:13px;color:#000;white-space:nowrap;letter-spacing:-0.5px;"></div>
<svg style="position:absolute;left:690px;top:330px" width="7" height="7" viewBox="0 0 7 7"><path d="M0 0H7V7Z" fill="#1aa01a"/></svg>
<div style="left:786px;width:86.5px;top:332.34px;height:16px;overflow:hidden;font-size:12px;line-height:13px;color:#000;white-space:nowrap;letter-spacing:-0.5px;text-align:right">24 322,43</div>
<div style="left:875px;width:90.5px;top:332.34px;height:16px;overflow:hidden;font-size:12px;line-height:13px;color:#000;white-space:nowrap;letter-spacing:-0.5px;text-align:right">23 288,12</div>
<div style="left:968px;width:63.5px;top:332.34px;height:16px;overflow:hidden;font-size:12px;line-height:13px;color:#000;white-space:nowrap;letter-spacing:-0.5px;text-align:right">0</div>
<div style="left:1034px;width:63.5px;top:332.34px;height:16px;overflow:hidden;font-size:12px;line-height:13px;color:#000;white-space:nowrap;letter-spacing:-0.5px;text-align:right">254,68</div>
<div style="left:1100px;width:63.5px;top:332.34px;height:16px;overflow:hidden;font-size:12px;line-height:13px;color:#000;white-space:nowrap;letter-spacing:-0.5px;text-align:right">650,51</div>
<div style="left:1166px;width:85.5px;top:332.34px;height:16px;overflow:hidden;font-size:12px;line-height:13px;color:#000;white-space:nowrap;letter-spacing:-0.5px;text-align:right">22 382,93</div>
<div style="left:1254px;width:63.5px;top:332.34px;height:16px;overflow:hidden;font-size:12px;line-height:13px;color:#000;white-space:nowrap;letter-spacing:-0.5px;text-align:right">0</div>
<div style="left:1320px;width:63.5px;top:332.34px;height:16px;overflow:hidden;font-size:12px;line-height:13px;color:#000;white-space:nowrap;letter-spacing:-0.5px;text-align:right">617,98</div>
<div style="left:1386px;width:63.5px;top:332.34px;height:16px;overflow:hidden;font-size:12px;line-height:13px;color:#000;white-space:nowrap;letter-spacing:-0.5px;text-align:right">416,33</div>
<div style="left:1452px;width:63.5px;top:332.34px;height:16px;overflow:hidden;font-size:12px;line-height:13px;color:#000;white-space:nowrap;letter-spacing:-0.5px;text-align:right">0</div>
<div style="left:1518px;width:63.5px;top:332.34px;height:16px;overflow:hidden;font-size:12px;line-height:13px;color:#000;white-space:nowrap;letter-spacing:-0.5px;text-align:right">0,0364</div>
<div style="left:1584px;width:86.5px;top:332.34px;height:16px;overflow:hidden;font-size:12px;line-height:13px;color:#000;white-space:nowrap;letter-spacing:-0.5px;text-align:right">3 456 570,57</div>
<div style="left:1673px;width:77.5px;top:332.34px;height:16px;overflow:hidden;font-size:12px;line-height:13px;color:#000;white-space:nowrap;letter-spacing:-0.5px;text-align:right">3 456 570,57</div>
<div style="left:4px;top:359px;width:167px;height:1px;background:#808080"></div>
<div style="left:171px;top:359px;width:1569px;height:1px;background:#c0c0c0"></div>
<div style="left:4px;top:360px;width:11px;height:29px;background:#f0f0f0"></div>
<div style="left:4px;top:360px;width:11px;height:1px;background:#ffffff"></div>
<div style="left:4px;top:360px;width:1px;height:29px;background:#ffffff"></div>
<div style="left:16px;top:360px;width:1724px;height:29px;background:#fde9e9"></div>
<div style="left:16px;top:360px;width:31px;height:1px;background:#ffffff"></div>
<div style="left:16px;top:360px;width:1px;height:29px;background:#ffffff"></div>
<div style="left:48px;top:360px;width:35px;height:1px;background:#ffffff"></div>
<div style="left:48px;top:360px;width:1px;height:29px;background:#ffffff"></div>
<div style="left:84px;top:360px;width:37px;height:1px;background:#ffffff"></div>
<div style="left:84px;top:360px;width:1px;height:29px;background:#ffffff"></div>
<div style="left:122px;top:360px;width:48px;height:1px;background:#ffffff"></div>
<div style="left:122px;top:360px;width:1px;height:29px;background:#ffffff"></div>
<div style="left:319px;top:360px;width:230px;height:29px;background:#a0a0a0"></div>
<svg style="position:absolute;left:6px;top:369px" width="7" height="11" viewBox="0 0 7 11"><path d="M1 0.5L6 5.5L1 10.5Z" fill="#000"/></svg>
<svg style="position:absolute;left:23px;top:371px" width="16" height="8" viewBox="0 0 16 8"><rect x="0.25" y="4.25" width="4.8" height="2.6" rx="1.3" fill="#e86a08" stroke="#a84000" stroke-width="0.5"/><rect x="0.8" y="4.5" width="3.6999999999999997" height="1.2" rx="0.6" fill="#ff8c1a"/><rect x="0.5" y="6.2" width="4.3" height="0.8" fill="#b04800"/><rect x="5.85" y="4.25" width="4.4" height="2.6" rx="1.3" fill="#e86a08" stroke="#a84000" stroke-width="0.5"/><rect x="6.3999999999999995" y="4.5" width="3.3000000000000003" height="1.2" rx="0.6" fill="#ff8c1a"/><rect x="6.1" y="6.2" width="3.9000000000000004" height="0.8" fill="#b04800"/><rect x="11.05" y="4.25" width="4.7" height="2.6" rx="1.3" fill="#e86a08" stroke="#a84000" stroke-width="0.5"/><rect x="11.600000000000001" y="4.5" width="3.6" height="1.2" rx="0.6" fill="#ff8c1a"/><rect x="11.3" y="6.2" width="4.2" height="0.8" fill="#b04800"/><rect x="2.25" y="2.25" width="5.0" height="2.6" rx="1.3" fill="#e86a08" stroke="#a84000" stroke-width="0.5"/><rect x="2.8" y="2.5" width="3.9" height="1.2" rx="0.6" fill="#ff8c1a"/><rect x="2.5" y="4.2" width="4.5" height="0.8" fill="#b04800"/><rect x="8.05" y="2.25" width="4.7" height="2.6" rx="1.3" fill="#e86a08" stroke="#a84000" stroke-width="0.5"/><rect x="8.6" y="2.5" width="3.6" height="1.2" rx="0.6" fill="#ff8c1a"/><rect x="8.3" y="4.2" width="4.2" height="0.8" fill="#b04800"/><rect x="5.45" y="0.25" width="5.3" height="2.6" rx="1.3" fill="#e86a08" stroke="#a84000" stroke-width="0.5"/><rect x="6.0" y="0.5" width="4.199999999999999" height="1.2" rx="0.6" fill="#ff8c1a"/><rect x="5.7" y="2.2" width="4.8" height="0.8" fill="#b04800"/></svg>
<div style="left:60px;top:369px;width:11px;height:11px;background:#fff;border:1px solid #8a8a8a"></div>
<div style="left:87px;width:34px;top:362.34px;height:16px;overflow:hidden;font-size:12px;line-height:13px;color:#000;white-space:nowrap;letter-spacing:-0.5px;">4</div>
<div style="left:173px;width:145px;top:362.34px;height:16px;overflow:hidden;font-size:12px;line-height:13px;color:#000;white-space:nowrap;letter-spacing:-0.5px;">ТЦ_04.00.00.00_50_50190151</div>
<div style="left:321px;width:228px;top:362.34px;height:16px;overflow:hidden;font-size:12px;line-height:13px;color:#fff;white-space:nowrap;letter-spacing:-0.5px;">Кирпич</div>
<div style="left:552px;width:64px;top:362.34px;height:16px;overflow:hidden;font-size:12px;line-height:13px;color:#000;white-space:nowrap;letter-spacing:-0.5px;">ШТ</div>
<div style="left:619px;width:78px;top:362.34px;height:16px;overflow:hidden;font-size:12px;line-height:13px;color:#000;white-space:nowrap;letter-spacing:-0.5px;">5</div>
<div style="left:700px;width:85px;top:362.34px;height:16px;overflow:hidden;font-size:12px;line-height:13px;color:#000;white-space:nowrap;letter-spacing:-0.5px;"></div>
<div style="left:786px;width:86.5px;top:362.34px;height:16px;overflow:hidden;font-size:12px;line-height:13px;color:#000;white-space:nowrap;letter-spacing:-0.5px;text-align:right">27 603,75</div>
<div style="left:875px;width:90.5px;top:362.34px;height:16px;overflow:hidden;font-size:12px;line-height:13px;color:#000;white-space:nowrap;letter-spacing:-0.5px;text-align:right">27 603,75</div>
<div style="left:968px;width:63.5px;top:362.34px;height:16px;overflow:hidden;font-size:12px;line-height:13px;color:#000;white-space:nowrap;letter-spacing:-0.5px;text-align:right">0</div>
<div style="left:1034px;width:63.5px;top:362.34px;height:16px;overflow:hidden;font-size:12px;line-height:13px;color:#000;white-space:nowrap;letter-spacing:-0.5px;text-align:right">0</div>
<div style="left:1100px;width:63.5px;top:362.34px;height:16px;overflow:hidden;font-size:12px;line-height:13px;color:#000;white-space:nowrap;letter-spacing:-0.5px;text-align:right">0</div>
<div style="left:1166px;width:85.5px;top:362.34px;height:16px;overflow:hidden;font-size:12px;line-height:13px;color:#000;white-space:nowrap;letter-spacing:-0.5px;text-align:right">27 603,75</div>
<div style="left:1254px;width:63.5px;top:362.34px;height:16px;overflow:hidden;font-size:12px;line-height:13px;color:#000;white-space:nowrap;letter-spacing:-0.5px;text-align:right">0</div>
<div style="left:1320px;width:63.5px;top:362.34px;height:16px;overflow:hidden;font-size:12px;line-height:13px;color:#000;white-space:nowrap;letter-spacing:-0.5px;text-align:right">0</div>
<div style="left:1386px;width:63.5px;top:362.34px;height:16px;overflow:hidden;font-size:12px;line-height:13px;color:#000;white-space:nowrap;letter-spacing:-0.5px;text-align:right">0</div>
<div style="left:1452px;width:63.5px;top:362.34px;height:16px;overflow:hidden;font-size:12px;line-height:13px;color:#000;white-space:nowrap;letter-spacing:-0.5px;text-align:right">0</div>
<div style="left:1518px;width:63.5px;top:362.34px;height:16px;overflow:hidden;font-size:12px;line-height:13px;color:#000;white-space:nowrap;letter-spacing:-0.5px;text-align:right">0</div>
<div style="left:1584px;width:86.5px;top:362.34px;height:16px;overflow:hidden;font-size:12px;line-height:13px;color:#000;white-space:nowrap;letter-spacing:-0.5px;text-align:right">5 520,75</div>
<div style="left:1673px;width:77.5px;top:362.34px;height:16px;overflow:hidden;font-size:12px;line-height:13px;color:#000;white-space:nowrap;letter-spacing:-0.5px;text-align:right">5 520,75</div>
<div style="left:4px;top:389px;width:167px;height:1px;background:#808080"></div>
<div style="left:171px;top:389px;width:1569px;height:1px;background:#c0c0c0"></div>
<div style="left:4px;top:390px;width:11px;height:29px;background:#f0f0f0"></div>
<div style="left:4px;top:390px;width:11px;height:1px;background:#ffffff"></div>
<div style="left:4px;top:390px;width:1px;height:29px;background:#ffffff"></div>
<div style="left:16px;top:390px;width:1724px;height:29px;background:#fde9e9"></div>
<div style="left:16px;top:390px;width:31px;height:1px;background:#ffffff"></div>
<div style="left:16px;top:390px;width:1px;height:29px;background:#ffffff"></div>
<div style="left:48px;top:390px;width:35px;height:1px;background:#ffffff"></div>
<div style="left:48px;top:390px;width:1px;height:29px;background:#ffffff"></div>
<div style="left:84px;top:390px;width:37px;height:1px;background:#ffffff"></div>
<div style="left:84px;top:390px;width:1px;height:29px;background:#ffffff"></div>
<div style="left:122px;top:390px;width:48px;height:1px;background:#ffffff"></div>
<div style="left:122px;top:390px;width:1px;height:29px;background:#ffffff"></div>
<svg style="position:absolute;left:18px;top:392px" width="28" height="24" viewBox="0 0 28 24"><defs><linearGradient id="bx1" x1="0" y1="0" x2="0" y2="1"><stop offset="0" stop-color="#f4dca0"/><stop offset="1" stop-color="#c88070"/></linearGradient></defs><rect x="9.6" y="6.4" width="9" height="9.8" fill="url(#bx1)" stroke="#6a4a3a" stroke-width="0.9"/><path d="M11 9H13M14.5 9.5H16.5M15.5 10V12.5M14.5 13.5H16.5" stroke="#a03a2a" stroke-width="0.9"/><rect x="5.4" y="11.6" width="6" height="6" fill="#e8d098" stroke="#5a3a2a" stroke-width="0.9"/><path d="M7.3 12.5V17M9.4 12.5V17" stroke="#a88850" stroke-width="0.7"/><rect x="15.6" y="14.6" width="5" height="4" fill="#f0b878" stroke="#5a3a2a" stroke-width="0.9"/></svg>
<div style="left:60px;top:399px;width:11px;height:11px;background:#fff;border:1px solid #8a8a8a"></div>
<div style="left:87px;width:34px;top:392.34px;height:16px;overflow:hidden;font-size:12px;line-height:13px;color:#000;white-space:nowrap;letter-spacing:-0.5px;">5</div>
<div style="left:173px;width:145px;top:392.34px;height:16px;overflow:hidden;font-size:12px;line-height:13px;color:#000;white-space:nowrap;letter-spacing:-0.5px;">ТЦ_61.1.01.01-0002_4.1</div>
<div style="left:321px;width:228px;top:392.34px;height:16px;overflow:hidden;font-size:12px;line-height:13px;color:#000;white-space:nowrap;letter-spacing:-0.5px;">Антенна телевизионная коллективная, с</div>
<div style="left:321px;width:228px;top:405.34px;height:16px;overflow:hidden;font-size:12px;line-height:13px;color:#000;white-space:nowrap;letter-spacing:-0.5px;">горизонтальной поляризацией</div>
<div style="left:552px;width:64px;top:392.34px;height:16px;overflow:hidden;font-size:12px;line-height:13px;color:#000;white-space:nowrap;letter-spacing:-0.5px;">ШТ</div>
<div style="left:619px;width:78px;top:392.34px;height:16px;overflow:hidden;font-size:12px;line-height:13px;color:#000;white-space:nowrap;letter-spacing:-0.5px;">0</div>
<div style="left:700px;width:85px;top:392.34px;height:16px;overflow:hidden;font-size:12px;line-height:13px;color:#000;white-space:nowrap;letter-spacing:-0.5px;"></div>
<div style="left:786px;width:86.5px;top:392.34px;height:16px;overflow:hidden;font-size:12px;line-height:13px;color:#000;white-space:nowrap;letter-spacing:-0.5px;text-align:right">0</div>
<div style="left:875px;width:90.5px;top:392.34px;height:16px;overflow:hidden;font-size:12px;line-height:13px;color:#000;white-space:nowrap;letter-spacing:-0.5px;text-align:right">0</div>
<div style="left:968px;width:63.5px;top:392.34px;height:16px;overflow:hidden;font-size:12px;line-height:13px;color:#000;white-space:nowrap;letter-spacing:-0.5px;text-align:right">0</div>
<div style="left:1034px;width:63.5px;top:392.34px;height:16px;overflow:hidden;font-size:12px;line-height:13px;color:#000;white-space:nowrap;letter-spacing:-0.5px;text-align:right">0</div>
<div style="left:1100px;width:63.5px;top:392.34px;height:16px;overflow:hidden;font-size:12px;line-height:13px;color:#000;white-space:nowrap;letter-spacing:-0.5px;text-align:right">0</div>
<div style="left:1166px;width:85.5px;top:392.34px;height:16px;overflow:hidden;font-size:12px;line-height:13px;color:#000;white-space:nowrap;letter-spacing:-0.5px;text-align:right">0</div>
<div style="left:1254px;width:63.5px;top:392.34px;height:16px;overflow:hidden;font-size:12px;line-height:13px;color:#000;white-space:nowrap;letter-spacing:-0.5px;text-align:right">0</div>
<div style="left:1320px;width:63.5px;top:392.34px;height:16px;overflow:hidden;font-size:12px;line-height:13px;color:#000;white-space:nowrap;letter-spacing:-0.5px;text-align:right">0</div>
<div style="left:1386px;width:63.5px;top:392.34px;height:16px;overflow:hidden;font-size:12px;line-height:13px;color:#000;white-space:nowrap;letter-spacing:-0.5px;text-align:right">0</div>
<div style="left:1452px;width:63.5px;top:392.34px;height:16px;overflow:hidden;font-size:12px;line-height:13px;color:#000;white-space:nowrap;letter-spacing:-0.5px;text-align:right">0</div>
<div style="left:1518px;width:63.5px;top:392.34px;height:16px;overflow:hidden;font-size:12px;line-height:13px;color:#000;white-space:nowrap;letter-spacing:-0.5px;text-align:right">0</div>
<div style="left:1584px;width:86.5px;top:392.34px;height:16px;overflow:hidden;font-size:12px;line-height:13px;color:#000;white-space:nowrap;letter-spacing:-0.5px;text-align:right">0</div>
<div style="left:4px;top:419px;width:167px;height:1px;background:#808080"></div>
<div style="left:171px;top:419px;width:1569px;height:1px;background:#c0c0c0"></div>
<div style="left:4px;top:420px;width:11px;height:29px;background:#f0f0f0"></div>
<div style="left:4px;top:420px;width:11px;height:1px;background:#ffffff"></div>
<div style="left:4px;top:420px;width:1px;height:29px;background:#ffffff"></div>
<div style="left:16px;top:420px;width:1724px;height:29px;background:#fff"></div>
<div style="left:16px;top:420px;width:31px;height:1px;background:#ffffff"></div>
<div style="left:16px;top:420px;width:1px;height:29px;background:#ffffff"></div>
<div style="left:48px;top:420px;width:35px;height:1px;background:#ffffff"></div>
<div style="left:48px;top:420px;width:1px;height:29px;background:#ffffff"></div>
<div style="left:84px;top:420px;width:37px;height:1px;background:#ffffff"></div>
<div style="left:84px;top:420px;width:1px;height:29px;background:#ffffff"></div>
<div style="left:122px;top:420px;width:48px;height:1px;background:#ffffff"></div>
<div style="left:122px;top:420px;width:1px;height:29px;background:#ffffff"></div>
<div style="left:60px;top:429px;width:11px;height:11px;background:#fff;border:1px solid #8a8a8a"></div>
<div style="left:87px;width:34px;top:422.34px;height:16px;overflow:hidden;font-size:12px;line-height:13px;color:#000;white-space:nowrap;letter-spacing:-0.5px;">6</div>
<div style="left:173px;width:145px;top:422.34px;height:16px;overflow:hidden;font-size:12px;line-height:13px;color:#000;white-space:nowrap;letter-spacing:-0.5px;">16-01-001-01</div>
<svg style="position:absolute;left:303px;top:434px" width="14" height="14" viewBox="0 0 14 14"><rect x="1.6" y="0.9" width="4.8" height="12" rx="2.2" fill="none" stroke="#484848" stroke-width="1.4"/><path d="M3.5 3V10" stroke="#484848" stroke-width="0.9"/><rect x="7" y="1" width="6.2" height="6" rx="0.6" fill="#16a016"/><path d="M8.2 3.8L9.6 5.2L12 2.6" stroke="#fff" stroke-width="1" fill="none"/></svg>
<div style="left:321px;width:228px;top:422.34px;height:16px;overflow:hidden;font-size:12px;line-height:13px;color:#000;white-space:nowrap;letter-spacing:-0.5px;">Прокладка в траншеях труб чугунных</div>
<div style="left:321px;width:228px;top:435.34px;height:16px;overflow:hidden;font-size:12px;line-height:13px;color:#000;white-space:nowrap;letter-spacing:-0.5px;">напорных раструбных диаметром: 65 мм</div>
<div style="left:552px;width:64px;top:422.34px;height:16px;overflow:hidden;font-size:12px;line-height:13px;color:#000;white-space:nowrap;letter-spacing:-0.5px;">100 м</div>
<div style="left:619px;width:78px;top:422.34px;height:16px;overflow:hidden;font-size:12px;line-height:13px;color:#000;white-space:nowrap;letter-spacing:-0.5px;">0,07</div>
<div style="left:700px;width:85px;top:422.34px;height:16px;overflow:hidden;font-size:12px;line-height:13px;color:#000;white-space:nowrap;letter-spacing:-0.5px;"></div>
<svg style="position:absolute;left:690px;top:420px" width="7" height="7" viewBox="0 0 7 7"><path d="M0 0H7V7Z" fill="#1aa01a"/></svg>
<div style="left:786px;width:86.5px;top:422.34px;height:16px;overflow:hidden;font-size:12px;line-height:13px;color:#000;white-space:nowrap;letter-spacing:-0.5px;text-align:right">8 293,33</div>
<div style="left:875px;width:90.5px;top:422.34px;height:16px;overflow:hidden;font-size:12px;line-height:13px;color:#000;white-space:nowrap;letter-spacing:-0.5px;text-align:right">4 302,34</div>
<div style="left:968px;width:63.5px;top:422.34px;height:16px;overflow:hidden;font-size:12px;line-height:13px;color:#000;white-space:nowrap;letter-spacing:-0.5px;text-align:right">0</div>
<div style="left:1034px;width:63.5px;top:422.34px;height:16px;overflow:hidden;font-size:12px;line-height:13px;color:#000;white-space:nowrap;letter-spacing:-0.5px;text-align:right">1 186,67</div>
<div style="left:1100px;width:63.5px;top:422.34px;height:16px;overflow:hidden;font-size:12px;line-height:13px;color:#000;white-space:nowrap;letter-spacing:-0.5px;text-align:right">2 067,87</div>
<div style="left:1166px;width:85.5px;top:422.34px;height:16px;overflow:hidden;font-size:12px;line-height:13px;color:#000;white-space:nowrap;letter-spacing:-0.5px;text-align:right">1 047,8</div>
<div style="left:1254px;width:63.5px;top:422.34px;height:16px;overflow:hidden;font-size:12px;line-height:13px;color:#000;white-space:nowrap;letter-spacing:-0.5px;text-align:right">0</div>
<div style="left:1320px;width:63.5px;top:422.34px;height:16px;overflow:hidden;font-size:12px;line-height:13px;color:#000;white-space:nowrap;letter-spacing:-0.5px;text-align:right">2 502,12</div>
<div style="left:1386px;width:63.5px;top:422.34px;height:16px;overflow:hidden;font-size:12px;line-height:13px;color:#000;white-space:nowrap;letter-spacing:-0.5px;text-align:right">1 488,87</div>
<div style="left:1452px;width:63.5px;top:422.34px;height:16px;overflow:hidden;font-size:12px;line-height:13px;color:#000;white-space:nowrap;letter-spacing:-0.5px;text-align:right">0</div>
<div style="left:1518px;width:63.5px;top:422.34px;height:16px;overflow:hidden;font-size:12px;line-height:13px;color:#000;white-space:nowrap;letter-spacing:-0.5px;text-align:right">0,1085</div>
<div style="left:1584px;width:86.5px;top:422.34px;height:16px;overflow:hidden;font-size:12px;line-height:13px;color:#000;white-space:nowrap;letter-spacing:-0.5px;text-align:right">1 911 580,08</div>
<div style="left:1673px;width:77.5px;top:422.34px;height:16px;overflow:hidden;font-size:12px;line-height:13px;color:#000;white-space:nowrap;letter-spacing:-0.5px;text-align:right">1 911 580,08</div>
<div style="left:4px;top:449px;width:167px;height:1px;background:#808080"></div>
<div style="left:171px;top:449px;width:1569px;height:1px;background:#c0c0c0"></div>
<div style="left:4px;top:450px;width:11px;height:29px;background:#f0f0f0"></div>
<div style="left:4px;top:450px;width:11px;height:1px;background:#ffffff"></div>
<div style="left:4px;top:450px;width:1px;height:29px;background:#ffffff"></div>
<div style="left:16px;top:450px;width:1724px;height:29px;background:#fde9e9"></div>
<div style="left:16px;top:450px;width:31px;height:1px;background:#ffffff"></div>
<div style="left:16px;top:450px;width:1px;height:29px;background:#ffffff"></div>
<div style="left:48px;top:450px;width:35px;height:1px;background:#ffffff"></div>
<div style="left:48px;top:450px;width:1px;height:29px;background:#ffffff"></div>
<div style="left:84px;top:450px;width:37px;height:1px;background:#ffffff"></div>
<div style="left:84px;top:450px;width:1px;height:29px;background:#ffffff"></div>
<div style="left:122px;top:450px;width:48px;height:1px;background:#ffffff"></div>
<div style="left:122px;top:450px;width:1px;height:29px;background:#ffffff"></div>
<svg style="position:absolute;left:23px;top:461px" width="16" height="8" viewBox="0 0 16 8"><rect x="0.25" y="4.25" width="4.8" height="2.6" rx="1.3" fill="#e86a08" stroke="#a84000" stroke-width="0.5"/><rect x="0.8" y="4.5" width="3.6999999999999997" height="1.2" rx="0.6" fill="#ff8c1a"/><rect x="0.5" y="6.2" width="4.3" height="0.8" fill="#b04800"/><rect x="5.85" y="4.25" width="4.4" height="2.6" rx="1.3" fill="#e86a08" stroke="#a84000" stroke-width="0.5"/><rect x="6.3999999999999995" y="4.5" width="3.3000000000000003" height="1.2" rx="0.6" fill="#ff8c1a"/><rect x="6.1" y="6.2" width="3.9000000000000004" height="0.8" fill="#b04800"/><rect x="11.05" y="4.25" width="4.7" height="2.6" rx="1.3" fill="#e86a08" stroke="#a84000" stroke-width="0.5"/><rect x="11.600000000000001" y="4.5" width="3.6" height="1.2" rx="0.6" fill="#ff8c1a"/><rect x="11.3" y="6.2" width="4.2" height="0.8" fill="#b04800"/><rect x="2.25" y="2.25" width="5.0" height="2.6" rx="1.3" fill="#e86a08" stroke="#a84000" stroke-width="0.5"/><rect x="2.8" y="2.5" width="3.9" height="1.2" rx="0.6" fill="#ff8c1a"/><rect x="2.5" y="4.2" width="4.5" height="0.8" fill="#b04800"/><rect x="8.05" y="2.25" width="4.7" height="2.6" rx="1.3" fill="#e86a08" stroke="#a84000" stroke-width="0.5"/><rect x="8.6" y="2.5" width="3.6" height="1.2" rx="0.6" fill="#ff8c1a"/><rect x="8.3" y="4.2" width="4.2" height="0.8" fill="#b04800"/><rect x="5.45" y="0.25" width="5.3" height="2.6" rx="1.3" fill="#e86a08" stroke="#a84000" stroke-width="0.5"/><rect x="6.0" y="0.5" width="4.199999999999999" height="1.2" rx="0.6" fill="#ff8c1a"/><rect x="5.7" y="2.2" width="4.8" height="0.8" fill="#b04800"/></svg>
<div style="left:87px;width:34px;top:452.34px;height:16px;overflow:hidden;font-size:12px;line-height:13px;color:#000;white-space:nowrap;letter-spacing:-0.5px;">6,1</div>
<div style="left:173px;width:145px;top:452.34px;height:16px;overflow:hidden;font-size:12px;line-height:13px;color:#000;white-space:nowrap;letter-spacing:-0.5px;">23.6.02.03</div>
<div style="left:321px;width:228px;top:452.34px;height:16px;overflow:hidden;font-size:12px;line-height:13px;color:#000;white-space:nowrap;letter-spacing:-0.5px;">Трубы чугунные напорные раструбные</div>
<div style="left:552px;width:64px;top:452.34px;height:16px;overflow:hidden;font-size:12px;line-height:13px;color:#000;white-space:nowrap;letter-spacing:-0.5px;">м</div>
<div style="left:619px;width:78px;top:452.34px;height:16px;overflow:hidden;font-size:12px;line-height:13px;color:#000;white-space:nowrap;letter-spacing:-0.5px;">7,07</div>
<div style="left:700px;width:85px;top:452.34px;height:16px;overflow:hidden;font-size:12px;line-height:13px;color:#000;white-space:nowrap;letter-spacing:-0.5px;">101</div>
<div style="left:786px;width:46.5px;top:452.34px;height:16px;overflow:hidden;font-size:12px;line-height:13px;color:#000;white-space:nowrap;letter-spacing:-0.5px;text-align:right">-</div>
<div style="left:875px;width:90.5px;top:452.34px;height:16px;overflow:hidden;font-size:12px;line-height:13px;color:#000;white-space:nowrap;letter-spacing:-0.5px;text-align:right">0</div>
<div style="left:968px;width:63.5px;top:452.34px;height:16px;overflow:hidden;font-size:12px;line-height:13px;color:#000;white-space:nowrap;letter-spacing:-0.5px;text-align:right">0</div>
<div style="left:1034px;width:63.5px;top:452.34px;height:16px;overflow:hidden;font-size:12px;line-height:13px;color:#000;white-space:nowrap;letter-spacing:-0.5px;text-align:right">0</div>
<div style="left:1100px;width:63.5px;top:452.34px;height:16px;overflow:hidden;font-size:12px;line-height:13px;color:#000;white-space:nowrap;letter-spacing:-0.5px;text-align:right">0</div>
<div style="left:1166px;width:85.5px;top:452.34px;height:16px;overflow:hidden;font-size:12px;line-height:13px;color:#000;white-space:nowrap;letter-spacing:-0.5px;text-align:right">0</div>
<div style="left:1254px;width:63.5px;top:452.34px;height:16px;overflow:hidden;font-size:12px;line-height:13px;color:#000;white-space:nowrap;letter-spacing:-0.5px;text-align:right">0</div>
<div style="left:1320px;width:63.5px;top:452.34px;height:16px;overflow:hidden;font-size:12px;line-height:13px;color:#000;white-space:nowrap;letter-spacing:-0.5px;text-align:right">0</div>
<div style="left:1386px;width:63.5px;top:452.34px;height:16px;overflow:hidden;font-size:12px;line-height:13px;color:#000;white-space:nowrap;letter-spacing:-0.5px;text-align:right">0</div>
<div style="left:1452px;width:63.5px;top:452.34px;height:16px;overflow:hidden;font-size:12px;line-height:13px;color:#000;white-space:nowrap;letter-spacing:-0.5px;text-align:right">0</div>
<div style="left:1518px;width:63.5px;top:452.34px;height:16px;overflow:hidden;font-size:12px;line-height:13px;color:#000;white-space:nowrap;letter-spacing:-0.5px;text-align:right">0</div>
<div style="left:1584px;width:86.5px;top:452.34px;height:16px;overflow:hidden;font-size:12px;line-height:13px;color:#000;white-space:nowrap;letter-spacing:-0.5px;text-align:right">0</div>
<div style="left:4px;top:479px;width:167px;height:1px;background:#808080"></div>
<div style="left:171px;top:479px;width:1569px;height:1px;background:#c0c0c0"></div>
<div style="left:15px;top:119px;width:1px;height:360px;background:#808080"></div>
<div style="left:47px;top:119px;width:1px;height:360px;background:#808080"></div>
<div style="left:83px;top:119px;width:1px;height:360px;background:#808080"></div>
<div style="left:121px;top:119px;width:1px;height:360px;background:#808080"></div>
<div style="left:170px;top:119px;width:1px;height:360px;background:#808080"></div>
<div style="left:318px;top:119px;width:1px;height:360px;background:#c0c0c0"></div>
<div style="left:549px;top:119px;width:1px;height:360px;background:#c0c0c0"></div>
<div style="left:616px;top:119px;width:1px;height:360px;background:#c0c0c0"></div>
<div style="left:697px;top:119px;width:1px;height:360px;background:#c0c0c0"></div>
<div style="left:785px;top:119px;width:1px;height:360px;background:#c0c0c0"></div>
<div style="left:874px;top:119px;width:1px;height:360px;background:#c0c0c0"></div>
<div style="left:967px;top:119px;width:1px;height:360px;background:#c0c0c0"></div>
<div style="left:1033px;top:119px;width:1px;height:360px;background:#c0c0c0"></div>
<div style="left:1099px;top:119px;width:1px;height:360px;background:#c0c0c0"></div>
<div style="left:1165px;top:119px;width:1px;height:360px;background:#c0c0c0"></div>
<div style="left:1253px;top:119px;width:1px;height:360px;background:#c0c0c0"></div>
<div style="left:1319px;top:119px;width:1px;height:360px;background:#c0c0c0"></div>
<div style="left:1385px;top:119px;width:1px;height:360px;background:#c0c0c0"></div>
<div style="left:1451px;top:119px;width:1px;height:360px;background:#c0c0c0"></div>
<div style="left:1517px;top:119px;width:1px;height:360px;background:#c0c0c0"></div>
<div style="left:1583px;top:119px;width:1px;height:360px;background:#c0c0c0"></div>
<div style="left:1672px;top:119px;width:1px;height:360px;background:#c0c0c0"></div>
</div>
<div style="left:3px;top:655px;width:1px;height:16px;background:#808080"></div>
<div style="left:1740px;top:84px;width:16px;height:571px;background:#f0f0f0"></div>
<div style="left:1741px;top:286px;width:14px;height:281px;background:#cdcdcd"></div>
<svg style="position:absolute;left:1743px;top:88px" width="11" height="8" viewBox="0 0 11 8"><path d="M1.5 6.5L5.5 2.5L9.5 6.5" stroke="#606060" stroke-width="1.6" fill="none"/></svg>
<svg style="position:absolute;left:1743px;top:642px" width="11" height="8" viewBox="0 0 11 8"><path d="M1.5 1.5L5.5 5.5L9.5 1.5" stroke="#606060" stroke-width="1.6" fill="none"/></svg>
<div style="left:4px;top:655px;width:1752px;height:16px;background:#f0f0f0"></div>
<div style="left:21px;top:655px;width:17px;height:15px;background:#cdcdcd"></div>
<svg style="position:absolute;left:8px;top:658px" width="8" height="11" viewBox="0 0 8 11"><path d="M6 1.5L2 5.5L6 9.5" stroke="#606060" stroke-width="1.6" fill="none"/></svg>
<svg style="position:absolute;left:1728px;top:657px" width="8" height="11" viewBox="0 0 8 11"><path d="M2 1.5L6 5.5L2 9.5" stroke="#606060" stroke-width="1.6" fill="none"/></svg>
<div style="left:4px;top:671px;width:1752px;height:1px;background:#ffffff"></div>
<div style="left:75px;top:673px;width:1684px;height:1px;background:#696969"></div>
<div style="left:7.3px;top:677.84px;font-size:12px;line-height:14px;color:#000;white-space:nowrap;letter-spacing:-0.5px;">Полный вид</div>
<div style="left:1px;top:692px;width:74px;height:1px;background:#696969"></div>
<div style="left:75px;top:673px;width:106px;height:19px;background:#f0f0f0;border-top:1px solid #696969;border-left:1px solid #696969;border-right:1px solid #696969;border-bottom:1px solid #696969"></div>
<div style="left:76px;top:674px;width:104px;height:1px;background:#ffffff"></div>
<div style="left:76px;top:674px;width:1px;height:17px;background:#ffffff"></div>
<div style="left:80px;top:675.84px;font-size:12px;line-height:14px;color:#000;white-space:nowrap;letter-spacing:-0.5px;">Сокращенный вид</div>
<div style="left:183px;top:673px;width:67px;height:19px;background:#f0f0f0;border-top:1px solid #696969;border-left:1px solid #696969;border-right:1px solid #696969;border-bottom:1px solid #696969"></div>
<div style="left:184px;top:674px;width:65px;height:1px;background:#ffffff"></div>
<div style="left:184px;top:674px;width:1px;height:17px;background:#ffffff"></div>
<div style="left:188px;top:675.84px;font-size:12px;line-height:14px;color:#000;white-space:nowrap;letter-spacing:-0.5px;">Вид строки</div>
<div style="left:251px;top:673px;width:101px;height:19px;background:#f0f0f0;border-top:1px solid #696969;border-left:1px solid #696969;border-right:1px solid #696969;border-bottom:1px solid #696969"></div>
<div style="left:252px;top:674px;width:99px;height:1px;background:#ffffff"></div>
<div style="left:252px;top:674px;width:1px;height:17px;background:#ffffff"></div>
<div style="left:257.4px;top:675.84px;font-size:12px;line-height:14px;color:#000;white-space:nowrap;letter-spacing:-0.5px;">Объектная смета</div>
<div style="left:353px;top:673px;width:87px;height:19px;background:#f0f0f0;border-top:1px solid #696969;border-left:1px solid #696969;border-right:1px solid #696969;border-bottom:1px solid #696969"></div>
<div style="left:354px;top:674px;width:85px;height:1px;background:#ffffff"></div>
<div style="left:354px;top:674px;width:1px;height:17px;background:#ffffff"></div>
<div style="left:359.4px;top:675.84px;font-size:12px;line-height:14px;color:#000;white-space:nowrap;letter-spacing:-0.5px;">Предпросмотр</div>
<div style="left:5px;top:697px;width:1px;height:390px;background:#a0a0a0"></div>
<div style="left:1px;top:695px;width:9px;height:14px;background:#f0f0f0;border-top:1px solid #ffffff;border-right:1px solid #696969;border-bottom:1px solid #696969"></div>
<svg style="position:absolute;left:2px;top:699px" width="7" height="8" viewBox="0 0 7 8"><path d="M1.5 1.5L5.5 5.5M5.5 1.5L1.5 5.5" stroke="#222" stroke-width="1"/></svg>
<div style="left:7px;top:694px;width:1750px;height:391px;border:3px solid #ff0000"></div>
<div style="left:10px;top:697px;width:1744px;height:1px;background:#ffffff"></div>
<div style="left:10px;top:698px;width:1744px;height:25px;background:#f0f0f0"></div>
<div style="left:17px;top:701px;width:1px;height:19px;background:#a0a0a0"></div>
<div style="left:18px;top:701px;width:1px;height:19px;background:#ffffff"></div>
<svg style="position:absolute;left:22px;top:704px" width="16" height="16" viewBox="0 0 16 16"><path d="M2 1H12L15 4V15H2Z" fill="#2a7a4a"/><path d="M4 3.5H12" stroke="#fff" stroke-dasharray="2 1" stroke-width="0.8"/><text x="8.5" y="13" font-size="7" font-weight="bold" fill="#fff" text-anchor="middle" font-family="Liberation Sans">KA</text></svg>
<div style="left:43px;top:703.84px;font-size:12px;line-height:14px;color:#000;white-space:nowrap;">Открыть справочник</div>
<div style="left:167px;top:700px;width:1px;height:21px;background:#a0a0a0"></div>
<div style="left:168px;top:700px;width:1px;height:21px;background:#ffffff"></div>
<svg style="position:absolute;left:174px;top:704px" width="16" height="16" viewBox="0 0 16 16"><circle cx="10" cy="6" r="4.5" fill="#bcd8f8" stroke="#e08a30" stroke-width="1.6"/><path d="M7 9L2 14" stroke="#d06a10" stroke-width="3" stroke-linecap="round"/></svg>
<div style="left:194px;top:703.84px;font-size:12px;line-height:14px;color:#000;white-space:nowrap;">Поиск в конъюнктурном анализе</div>
<div style="left:387px;top:700px;width:1px;height:21px;background:#a0a0a0"></div>
<div style="left:388px;top:700px;width:1px;height:21px;background:#ffffff"></div>
<svg style="position:absolute;left:393px;top:704px" width="16" height="16" viewBox="0 0 16 16"><path d="M5 4H11M8 1V7" stroke="#3a9a2a" stroke-width="2.5"/><path d="M5 12H11" stroke="#e84a20" stroke-width="2.5"/></svg>
<div style="left:414px;top:703.84px;font-size:12px;line-height:14px;color:#000;white-space:nowrap;">Показывать доп.затраты</div>
<div style="left:556px;top:700px;width:1px;height:21px;background:#a0a0a0"></div>
<div style="left:557px;top:700px;width:1px;height:21px;background:#ffffff"></div>
<svg style="position:absolute;left:562px;top:704px" width="16" height="16" viewBox="0 0 16 16"><path d="M3.5 1.5H10L13.5 5V14.5H3.5Z" fill="#fff" stroke="#999"/><path d="M9 4L6 9H9L7 13" stroke="#f07020" stroke-width="1.3" fill="none"/></svg>
<div style="left:583px;top:703.84px;font-size:12px;line-height:14px;color:#000;white-space:nowrap;">Использовать валюту</div>
<div style="left:711px;top:700px;width:1px;height:21px;background:#a0a0a0"></div>
<div style="left:712px;top:700px;width:1px;height:21px;background:#ffffff"></div>
<svg style="position:absolute;left:716px;top:704px" width="16" height="16" viewBox="0 0 16 16"><rect x="1.5" y="1.5" width="10" height="8" fill="#d8e8f8" stroke="#506a90"/><rect x="4.5" y="6.5" width="11" height="8" fill="#fff" stroke="#506a90"/><path d="M6 9H14M6 12H14" stroke="#80a0c0"/></svg>
<div style="left:738px;top:703.84px;font-size:12px;line-height:14px;color:#000;white-space:nowrap;">Просмотр документа</div>
<div style="left:863px;top:698px;width:1px;height:25px;background:#a0a0a0"></div>
<div style="left:0;top:0;width:1754px;height:1069px;overflow:hidden">
<div style="left:12px;top:723px;width:1742px;height:346px;background:#f4f7fb"></div>
<div style="left:13px;top:724px;width:1741px;height:75px;background:#f0f0f0"></div>
<div style="left:12px;top:723px;width:1742px;height:1px;background:#a0a0a0"></div>
<div style="left:12px;top:723px;width:1px;height:346px;background:#a0a0a0"></div>
<div style="left:13px;top:724px;width:11px;height:1px;background:#ffffff"></div>
<div style="left:13px;top:724px;width:1px;height:75px;background:#ffffff"></div>
<div style="left:24px;top:723px;width:1px;height:77px;background:#a0a0a0"></div>
<div style="left:25px;top:724px;width:344px;height:1px;background:#ffffff"></div>
<div style="left:25px;top:724px;width:1px;height:18px;background:#ffffff"></div>
<div style="left:369px;top:723px;width:1px;height:19px;background:#a0a0a0"></div>
<div style="left:370px;top:724px;width:824px;height:1px;background:#ffffff"></div>
<div style="left:370px;top:724px;width:1px;height:18px;background:#ffffff"></div>
<div style="left:1194px;top:723px;width:1px;height:19px;background:#a0a0a0"></div>
<div style="left:1195px;top:724px;width:605px;height:1px;background:#ffffff"></div>
<div style="left:1195px;top:724px;width:1px;height:18px;background:#ffffff"></div>
<div style="left:24px;top:742px;width:1730px;height:1px;background:#a0a0a0"></div>
<div style="left:25px;top:743px;width:39px;height:1px;background:#ffffff"></div>
<div style="left:25px;top:743px;width:1px;height:56px;background:#ffffff"></div>
<div style="left:64px;top:742px;width:1px;height:57px;background:#a0a0a0"></div>
<div style="left:65px;top:743px;width:199px;height:1px;background:#ffffff"></div>
<div style="left:65px;top:743px;width:1px;height:56px;background:#ffffff"></div>
<div style="left:264px;top:742px;width:1px;height:57px;background:#a0a0a0"></div>
<div style="left:265px;top:743px;width:104px;height:1px;background:#ffffff"></div>
<div style="left:265px;top:743px;width:1px;height:56px;background:#ffffff"></div>
<div style="left:369px;top:742px;width:1px;height:57px;background:#a0a0a0"></div>
<div style="left:370px;top:743px;width:174px;height:1px;background:#ffffff"></div>
<div style="left:370px;top:743px;width:1px;height:56px;background:#ffffff"></div>
<div style="left:544px;top:742px;width:1px;height:57px;background:#a0a0a0"></div>
<div style="left:545px;top:743px;width:159px;height:1px;background:#ffffff"></div>
<div style="left:545px;top:743px;width:1px;height:56px;background:#ffffff"></div>
<div style="left:704px;top:742px;width:1px;height:57px;background:#a0a0a0"></div>
<div style="left:705px;top:743px;width:111px;height:1px;background:#ffffff"></div>
<div style="left:705px;top:743px;width:1px;height:56px;background:#ffffff"></div>
<div style="left:816px;top:742px;width:1px;height:57px;background:#a0a0a0"></div>
<div style="left:817px;top:743px;width:159px;height:1px;background:#ffffff"></div>
<div style="left:817px;top:743px;width:1px;height:56px;background:#ffffff"></div>
<div style="left:976px;top:742px;width:1px;height:57px;background:#a0a0a0"></div>
<div style="left:977px;top:743px;width:59px;height:1px;background:#ffffff"></div>
<div style="left:977px;top:743px;width:1px;height:56px;background:#ffffff"></div>
<div style="left:1036px;top:742px;width:1px;height:57px;background:#a0a0a0"></div>
<div style="left:1037px;top:743px;width:157px;height:1px;background:#ffffff"></div>
<div style="left:1037px;top:743px;width:1px;height:56px;background:#ffffff"></div>
<div style="left:1194px;top:742px;width:1px;height:57px;background:#a0a0a0"></div>
<div style="left:1195px;top:743px;width:119px;height:1px;background:#ffffff"></div>
<div style="left:1195px;top:743px;width:1px;height:56px;background:#ffffff"></div>
<div style="left:1314px;top:742px;width:1px;height:57px;background:#a0a0a0"></div>
<div style="left:1315px;top:743px;width:157px;height:1px;background:#ffffff"></div>
<div style="left:1315px;top:743px;width:1px;height:56px;background:#ffffff"></div>
<div style="left:1472px;top:742px;width:1px;height:57px;background:#a0a0a0"></div>
<div style="left:1473px;top:743px;width:194px;height:1px;background:#ffffff"></div>
<div style="left:1473px;top:743px;width:1px;height:56px;background:#ffffff"></div>
<div style="left:1667px;top:742px;width:1px;height:57px;background:#a0a0a0"></div>
<div style="left:1668px;top:743px;width:74px;height:1px;background:#ffffff"></div>
<div style="left:1668px;top:743px;width:1px;height:56px;background:#ffffff"></div>
<div style="left:1742px;top:742px;width:1px;height:57px;background:#a0a0a0"></div>
<div style="left:1743px;top:743px;width:57px;height:1px;background:#ffffff"></div>
<div style="left:1743px;top:743px;width:1px;height:56px;background:#ffffff"></div>
<div style="left:1800px;top:742px;width:1px;height:57px;background:#a0a0a0"></div>
<div style="left:12px;top:799px;width:1742px;height:1px;background:#a0a0a0"></div>
<div style="left:142.5px;top:727.84px;font-size:12px;line-height:14px;color:#000;white-space:nowrap;letter-spacing:-0.5px;">Строительный ресурс</div>
<div style="left:603.7px;top:727.84px;font-size:12px;line-height:14px;color:#000;white-space:nowrap;letter-spacing:-0.5px;">Данные из обосновывающего документа производителя/поставщика</div>
<div style="left:1654px;top:727.84px;font-size:12px;line-height:14px;color:#000;white-space:nowrap;letter-spacing:-0.5px;">Расчетные данные</div>
<div style="left:27px;top:763.84px;font-size:12px;line-height:14px;color:#000;white-space:nowrap;letter-spacing:-0.5px;">№</div>
<div style="left:67.5px;top:763.84px;font-size:12px;line-height:14px;color:#000;white-space:nowrap;letter-spacing:-0.5px;">Обоснование</div>
<div style="left:267px;top:763.84px;font-size:12px;line-height:14px;color:#000;white-space:nowrap;letter-spacing:-0.5px;">Код КСР</div>
<div style="left:372px;top:757.34px;font-size:12px;line-height:14px;color:#000;white-space:nowrap;letter-spacing:-0.5px;">Полное наименование</div>
<div style="left:372px;top:770.34px;font-size:12px;line-height:14px;color:#000;white-space:nowrap;letter-spacing:-0.5px;">строительного ресурса, затрат</div>
<div style="left:547px;top:750.84px;font-size:12px;line-height:14px;color:#000;white-space:nowrap;letter-spacing:-0.5px;">Единица измерения</div>
<div style="left:547px;top:763.84px;font-size:12px;line-height:14px;color:#000;white-space:nowrap;letter-spacing:-0.5px;">строительного ресурса,</div>
<div style="left:547px;top:776.84px;font-size:12px;line-height:14px;color:#000;white-space:nowrap;letter-spacing:-0.5px;">затрат</div>
<div style="left:707px;top:750.84px;font-size:12px;line-height:14px;color:#000;white-space:nowrap;letter-spacing:-0.5px;">Дата цены из</div>
<div style="left:707px;top:763.84px;font-size:12px;line-height:14px;color:#000;white-space:nowrap;letter-spacing:-0.5px;">прайса / ФГИС ЦС</div>
<div style="left:707px;top:776.84px;font-size:12px;line-height:14px;color:#000;white-space:nowrap;letter-spacing:-0.5px;">(для ФСБЦ-2022)</div>
<div style="left:819px;top:750.84px;font-size:12px;line-height:14px;color:#000;white-space:nowrap;letter-spacing:-0.5px;">Текущая отпускная цена за</div>
<div style="left:819px;top:763.84px;font-size:12px;line-height:14px;color:#000;white-space:nowrap;letter-spacing:-0.5px;">единицу измерения с НДС,</div>
<div style="left:819px;top:776.84px;font-size:12px;line-height:14px;color:#000;white-space:nowrap;letter-spacing:-0.5px;">руб.</div>
<div style="left:979px;top:763.84px;font-size:12px;line-height:14px;color:#000;white-space:nowrap;letter-spacing:-0.5px;">НДС, %</div>
<div style="left:1039px;top:750.84px;font-size:12px;line-height:14px;color:#000;white-space:nowrap;letter-spacing:-0.5px;">Текущая отпускная цена за</div>
<div style="left:1039px;top:763.84px;font-size:12px;line-height:14px;color:#000;white-space:nowrap;letter-spacing:-0.5px;">единицу измерения без НДС,</div>
<div style="left:1039px;top:776.84px;font-size:12px;line-height:14px;color:#000;white-space:nowrap;letter-spacing:-0.5px;">руб.</div>
<div style="left:1197px;top:750.84px;font-size:12px;line-height:14px;color:#000;white-space:nowrap;letter-spacing:-0.5px;">Индекс фактической</div>
<div style="left:1197px;top:763.84px;font-size:12px;line-height:14px;color:#000;white-space:nowrap;letter-spacing:-0.5px;">инфляции /&nbsp; Индекс</div>
<div style="left:1197px;top:776.84px;font-size:12px;line-height:14px;color:#000;white-space:nowrap;letter-spacing:-0.5px;">по&nbsp; ГОСР</div>
<div style="left:1317px;top:750.84px;font-size:12px;line-height:14px;color:#000;white-space:nowrap;letter-spacing:-0.5px;">Коэффициент пересчета</div>
<div style="left:1317px;top:763.84px;font-size:12px;line-height:14px;color:#000;white-space:nowrap;letter-spacing:-0.5px;">между единицами измерения</div>
<div style="left:1317px;top:776.84px;font-size:12px;line-height:14px;color:#000;white-space:nowrap;letter-spacing:-0.5px;">в прайсе и смете</div>
<div style="left:1475px;top:757.34px;font-size:12px;line-height:14px;color:#000;white-space:nowrap;letter-spacing:-0.5px;">Текущая отпускная цена за единицу</div>
<div style="left:1475px;top:770.34px;font-size:12px;line-height:14px;color:#000;white-space:nowrap;letter-spacing:-0.5px;">измерения в смете без НДС, руб.</div>
<div style="left:1670px;top:763.84px;font-size:12px;line-height:14px;color:#000;white-space:nowrap;letter-spacing:-0.5px;">Перевозка, %</div>
<div style="left:1745px;top:757.34px;font-size:12px;line-height:14px;color:#000;white-space:nowrap;letter-spacing:-0.5px;">Пе</div>
<div style="left:1745px;top:770.34px;font-size:12px;line-height:14px;color:#000;white-space:nowrap;letter-spacing:-0.5px;">ру</div>
<div style="left:13px;top:800px;width:11px;height:44px;background:#f0f0f0"></div>
<div style="left:13px;top:800px;width:11px;height:1px;background:#ffffff"></div>
<div style="left:13px;top:800px;width:1px;height:44px;background:#ffffff"></div>
<div style="left:65px;top:800px;width:199px;height:44px;background:#ccd0dc"></div>
<svg style="position:absolute;left:16px;top:816px" width="7" height="11" viewBox="0 0 7 11"><path d="M1 0.5L6 5.5L1 10.5Z" fill="#000"/></svg>
<div style="left:28px;top:801.67px;font-size:12.5px;line-height:15px;color:#000;white-space:nowrap;font-weight:700;">1.1</div>
<div style="left:67.5px;top:802.34px;font-size:12px;line-height:14px;color:#000;white-space:nowrap;letter-spacing:-0.5px;">ТЦ_04.00.00.00_33_33120</div>
<div style="left:67.5px;top:815.34px;font-size:12px;line-height:14px;color:#000;white-space:nowrap;letter-spacing:-0.5px;">00210_22.10.2025_01_1.1</div>
<div style="left:67.5px;top:828.34px;font-size:12px;line-height:14px;color:#008000;white-space:nowrap;letter-spacing:-0.5px;">Строительные</div>
<div style="left:267px;top:802.34px;font-size:12px;line-height:14px;color:#000;white-space:nowrap;letter-spacing:-0.5px;">04.00.00.00</div>
<svg style="position:absolute;left:351px;top:807px" width="16" height="8" viewBox="0 0 16 8"><rect x="0.25" y="4.25" width="4.8" height="2.6" rx="1.3" fill="#e86a08" stroke="#a84000" stroke-width="0.5"/><rect x="0.8" y="4.5" width="3.6999999999999997" height="1.2" rx="0.6" fill="#ff8c1a"/><rect x="0.5" y="6.2" width="4.3" height="0.8" fill="#b04800"/><rect x="5.85" y="4.25" width="4.4" height="2.6" rx="1.3" fill="#e86a08" stroke="#a84000" stroke-width="0.5"/><rect x="6.3999999999999995" y="4.5" width="3.3000000000000003" height="1.2" rx="0.6" fill="#ff8c1a"/><rect x="6.1" y="6.2" width="3.9000000000000004" height="0.8" fill="#b04800"/><rect x="11.05" y="4.25" width="4.7" height="2.6" rx="1.3" fill="#e86a08" stroke="#a84000" stroke-width="0.5"/><rect x="11.600000000000001" y="4.5" width="3.6" height="1.2" rx="0.6" fill="#ff8c1a"/><rect x="11.3" y="6.2" width="4.2" height="0.8" fill="#b04800"/><rect x="2.25" y="2.25" width="5.0" height="2.6" rx="1.3" fill="#e86a08" stroke="#a84000" stroke-width="0.5"/><rect x="2.8" y="2.5" width="3.9" height="1.2" rx="0.6" fill="#ff8c1a"/><rect x="2.5" y="4.2" width="4.5" height="0.8" fill="#b04800"/><rect x="8.05" y="2.25" width="4.7" height="2.6" rx="1.3" fill="#e86a08" stroke="#a84000" stroke-width="0.5"/><rect x="8.6" y="2.5" width="3.6" height="1.2" rx="0.6" fill="#ff8c1a"/><rect x="8.3" y="4.2" width="4.2" height="0.8" fill="#b04800"/><rect x="5.45" y="0.25" width="5.3" height="2.6" rx="1.3" fill="#e86a08" stroke="#a84000" stroke-width="0.5"/><rect x="6.0" y="0.5" width="4.199999999999999" height="1.2" rx="0.6" fill="#ff8c1a"/><rect x="5.7" y="2.2" width="4.8" height="0.8" fill="#b04800"/></svg>
<div style="left:372px;top:802.34px;font-size:12px;line-height:14px;color:#000;white-space:nowrap;letter-spacing:-0.5px;">Кирпич</div>
<div style="left:547px;top:802.34px;font-size:12px;line-height:14px;color:#000;white-space:nowrap;letter-spacing:-0.5px;">упак</div>
<div style="left:707px;top:802.34px;font-size:12px;line-height:14px;color:#000;white-space:nowrap;letter-spacing:-0.5px;">22.10.2025</div>
<div style="left:674.5px;top:802.34px;font-size:12px;line-height:14px;color:#000;white-space:nowrap;width:300px;text-align:right;overflow:hidden;letter-spacing:-0.5px;">256,00</div>
<div style="left:734.5px;top:802.34px;font-size:12px;line-height:14px;color:#000;white-space:nowrap;width:300px;text-align:right;overflow:hidden;letter-spacing:-0.5px;">20,00%</div>
<div style="left:892.5px;top:802.34px;font-size:12px;line-height:14px;color:#000;white-space:nowrap;width:300px;text-align:right;overflow:hidden;letter-spacing:-0.5px;">213,33</div>
<div style="left:1317px;top:802.34px;font-size:12px;line-height:14px;color:#000;white-space:nowrap;letter-spacing:-0.5px;">*25</div>
<div style="left:1365.5px;top:802.34px;font-size:12px;line-height:14px;color:#000;white-space:nowrap;width:300px;text-align:right;overflow:hidden;letter-spacing:-0.5px;">5 333,25</div>
<div style="left:13px;top:844px;width:1741px;height:1px;background:#a0a0a0"></div>
<div style="left:13px;top:845px;width:11px;height:44px;background:#f0f0f0"></div>
<div style="left:13px;top:845px;width:11px;height:1px;background:#ffffff"></div>
<div style="left:13px;top:845px;width:1px;height:44px;background:#ffffff"></div>
<div style="left:28px;top:846.67px;font-size:12.5px;line-height:15px;color:#000;white-space:nowrap;font-weight:700;">1.2</div>
<svg style="position:absolute;left:40px;top:844px" width="26" height="26" viewBox="0 0 26 26"><path d="M11.5 3.5H19.5L21.5 5.5V18.5H11.5Z" fill="#e8f0f4" stroke="#708090" stroke-width="1"/><path d="M12.5 5.5H19.5M12.5 17H20.5" stroke="#c0c8d0" stroke-width="1"/><rect x="13" y="8" width="7" height="6" fill="#ff0000"/><path d="M6.5 9.5H8.5V14.5H10L9.5 9.5H13.5V10.5H17V11.5H13V12.5H14V13.5H13V15.5H9.5L6.5 15Z" fill="#f8d870" stroke="#000" stroke-width="1"/></svg>
<div style="left:67.5px;top:847.34px;font-size:12px;line-height:14px;color:#000;white-space:nowrap;font-weight:700;letter-spacing:0.4px;">ТЦ_04.00.00.00_50_50190</div>
<div style="left:67.5px;top:860.34px;font-size:12px;line-height:14px;color:#000;white-space:nowrap;font-weight:700;letter-spacing:0.4px;">15313_22.10.2025_01_1.2</div>
<div style="left:67.5px;top:873.34px;font-size:12px;line-height:14px;color:#008000;white-space:nowrap;font-weight:700;letter-spacing:-0.09999999999999998px;">Строительные</div>
<div style="left:267px;top:847.34px;font-size:12px;line-height:14px;color:#000;white-space:nowrap;font-weight:700;letter-spacing:0.4px;">04.00.00.00</div>
<svg style="position:absolute;left:351px;top:852px" width="16" height="8" viewBox="0 0 16 8"><rect x="0.25" y="4.25" width="4.8" height="2.6" rx="1.3" fill="#e86a08" stroke="#a84000" stroke-width="0.5"/><rect x="0.8" y="4.5" width="3.6999999999999997" height="1.2" rx="0.6" fill="#ff8c1a"/><rect x="0.5" y="6.2" width="4.3" height="0.8" fill="#b04800"/><rect x="5.85" y="4.25" width="4.4" height="2.6" rx="1.3" fill="#e86a08" stroke="#a84000" stroke-width="0.5"/><rect x="6.3999999999999995" y="4.5" width="3.3000000000000003" height="1.2" rx="0.6" fill="#ff8c1a"/><rect x="6.1" y="6.2" width="3.9000000000000004" height="0.8" fill="#b04800"/><rect x="11.05" y="4.25" width="4.7" height="2.6" rx="1.3" fill="#e86a08" stroke="#a84000" stroke-width="0.5"/><rect x="11.600000000000001" y="4.5" width="3.6" height="1.2" rx="0.6" fill="#ff8c1a"/><rect x="11.3" y="6.2" width="4.2" height="0.8" fill="#b04800"/><rect x="2.25" y="2.25" width="5.0" height="2.6" rx="1.3" fill="#e86a08" stroke="#a84000" stroke-width="0.5"/><rect x="2.8" y="2.5" width="3.9" height="1.2" rx="0.6" fill="#ff8c1a"/><rect x="2.5" y="4.2" width="4.5" height="0.8" fill="#b04800"/><rect x="8.05" y="2.25" width="4.7" height="2.6" rx="1.3" fill="#e86a08" stroke="#a84000" stroke-width="0.5"/><rect x="8.6" y="2.5" width="3.6" height="1.2" rx="0.6" fill="#ff8c1a"/><rect x="8.3" y="4.2" width="4.2" height="0.8" fill="#b04800"/><rect x="5.45" y="0.25" width="5.3" height="2.6" rx="1.3" fill="#e86a08" stroke="#a84000" stroke-width="0.5"/><rect x="6.0" y="0.5" width="4.199999999999999" height="1.2" rx="0.6" fill="#ff8c1a"/><rect x="5.7" y="2.2" width="4.8" height="0.8" fill="#b04800"/></svg>
<div style="left:372px;top:847.34px;font-size:12px;line-height:14px;color:#000;white-space:nowrap;font-weight:700;letter-spacing:-0.2px;">кирпич</div>
<div style="left:547px;top:847.34px;font-size:12px;line-height:14px;color:#000;white-space:nowrap;font-weight:700;letter-spacing:-0.2px;">упак</div>
<div style="left:707px;top:847.34px;font-size:12px;line-height:14px;color:#000;white-space:nowrap;font-weight:700;letter-spacing:0.4px;">22.10.2025</div>
<div style="left:673.6px;top:847.34px;font-size:12px;line-height:14px;color:#000;white-space:nowrap;font-weight:700;width:300px;text-align:right;overflow:hidden;letter-spacing:0.4px;">265,00</div>
<div style="left:733.5999999999999px;top:847.34px;font-size:12px;line-height:14px;color:#000;white-space:nowrap;font-weight:700;width:300px;text-align:right;overflow:hidden;letter-spacing:0.4px;">20,00%</div>
<div style="left:891.5999999999999px;top:847.34px;font-size:12px;line-height:14px;color:#000;white-space:nowrap;font-weight:700;width:300px;text-align:right;overflow:hidden;letter-spacing:0.4px;">220,83</div>
<div style="left:1317px;top:847.34px;font-size:12px;line-height:14px;color:#000;white-space:nowrap;font-weight:700;letter-spacing:0.4px;">*25</div>
<div style="left:1364.6px;top:847.34px;font-size:12px;line-height:14px;color:#000;white-space:nowrap;font-weight:700;width:300px;text-align:right;overflow:hidden;letter-spacing:0.4px;">5 520,75</div>
<div style="left:13px;top:889px;width:1741px;height:1px;background:#a0a0a0"></div>
<div style="left:13px;top:890px;width:11px;height:44px;background:#f0f0f0"></div>
<div style="left:13px;top:890px;width:11px;height:1px;background:#ffffff"></div>
<div style="left:13px;top:890px;width:1px;height:44px;background:#ffffff"></div>
<div style="left:28px;top:891.67px;font-size:12.5px;line-height:15px;color:#000;white-space:nowrap;font-weight:700;">1.3</div>
<div style="left:67.5px;top:892.34px;font-size:12px;line-height:14px;color:#000;white-space:nowrap;letter-spacing:-0.5px;">ТЦ_04.00.00.00_77_77234</div>
<div style="left:67.5px;top:905.34px;font-size:12px;line-height:14px;color:#000;white-space:nowrap;letter-spacing:-0.5px;">56789_21.10.2025_01_1.3</div>
<div style="left:67.5px;top:918.34px;font-size:12px;line-height:14px;color:#008000;white-space:nowrap;letter-spacing:-0.5px;">Строительные</div>
<div style="left:267px;top:892.34px;font-size:12px;line-height:14px;color:#000;white-space:nowrap;letter-spacing:-0.5px;">04.00.00.00</div>
<svg style="position:absolute;left:351px;top:897px" width="16" height="8" viewBox="0 0 16 8"><rect x="0.25" y="4.25" width="4.8" height="2.6" rx="1.3" fill="#e86a08" stroke="#a84000" stroke-width="0.5"/><rect x="0.8" y="4.5" width="3.6999999999999997" height="1.2" rx="0.6" fill="#ff8c1a"/><rect x="0.5" y="6.2" width="4.3" height="0.8" fill="#b04800"/><rect x="5.85" y="4.25" width="4.4" height="2.6" rx="1.3" fill="#e86a08" stroke="#a84000" stroke-width="0.5"/><rect x="6.3999999999999995" y="4.5" width="3.3000000000000003" height="1.2" rx="0.6" fill="#ff8c1a"/><rect x="6.1" y="6.2" width="3.9000000000000004" height="0.8" fill="#b04800"/><rect x="11.05" y="4.25" width="4.7" height="2.6" rx="1.3" fill="#e86a08" stroke="#a84000" stroke-width="0.5"/><rect x="11.600000000000001" y="4.5" width="3.6" height="1.2" rx="0.6" fill="#ff8c1a"/><rect x="11.3" y="6.2" width="4.2" height="0.8" fill="#b04800"/><rect x="2.25" y="2.25" width="5.0" height="2.6" rx="1.3" fill="#e86a08" stroke="#a84000" stroke-width="0.5"/><rect x="2.8" y="2.5" width="3.9" height="1.2" rx="0.6" fill="#ff8c1a"/><rect x="2.5" y="4.2" width="4.5" height="0.8" fill="#b04800"/><rect x="8.05" y="2.25" width="4.7" height="2.6" rx="1.3" fill="#e86a08" stroke="#a84000" stroke-width="0.5"/><rect x="8.6" y="2.5" width="3.6" height="1.2" rx="0.6" fill="#ff8c1a"/><rect x="8.3" y="4.2" width="4.2" height="0.8" fill="#b04800"/><rect x="5.45" y="0.25" width="5.3" height="2.6" rx="1.3" fill="#e86a08" stroke="#a84000" stroke-width="0.5"/><rect x="6.0" y="0.5" width="4.199999999999999" height="1.2" rx="0.6" fill="#ff8c1a"/><rect x="5.7" y="2.2" width="4.8" height="0.8" fill="#b04800"/></svg>
<div style="left:372px;top:892.34px;font-size:12px;line-height:14px;color:#000;white-space:nowrap;letter-spacing:-0.5px;">кирпич</div>
<div style="left:547px;top:892.34px;font-size:12px;line-height:14px;color:#000;white-space:nowrap;letter-spacing:-0.5px;">упак</div>
<div style="left:707px;top:892.34px;font-size:12px;line-height:14px;color:#000;white-space:nowrap;letter-spacing:-0.5px;">21.10.2025</div>
<div style="left:674.5px;top:892.34px;font-size:12px;line-height:14px;color:#000;white-space:nowrap;width:300px;text-align:right;overflow:hidden;letter-spacing:-0.5px;">230,00</div>
<div style="left:734.5px;top:892.34px;font-size:12px;line-height:14px;color:#000;white-space:nowrap;width:300px;text-align:right;overflow:hidden;letter-spacing:-0.5px;">20,00%</div>
<div style="left:892.5px;top:892.34px;font-size:12px;line-height:14px;color:#000;white-space:nowrap;width:300px;text-align:right;overflow:hidden;letter-spacing:-0.5px;">191,67</div>
<div style="left:1317px;top:892.34px;font-size:12px;line-height:14px;color:#000;white-space:nowrap;letter-spacing:-0.5px;">*25</div>
<div style="left:1365.5px;top:892.34px;font-size:12px;line-height:14px;color:#000;white-space:nowrap;width:300px;text-align:right;overflow:hidden;letter-spacing:-0.5px;">4 791,75</div>
<div style="left:13px;top:934px;width:1741px;height:1px;background:#a0a0a0"></div>
<div style="left:24px;top:799px;width:1px;height:135px;background:#a0a0a0"></div>
<div style="left:64px;top:799px;width:1px;height:135px;background:#a0a0a0"></div>
<div style="left:264px;top:799px;width:1px;height:135px;background:#a0a0a0"></div>
<div style="left:369px;top:799px;width:1px;height:135px;background:#a0a0a0"></div>
<div style="left:544px;top:799px;width:1px;height:135px;background:#a0a0a0"></div>
<div style="left:704px;top:799px;width:1px;height:135px;background:#a0a0a0"></div>
<div style="left:816px;top:799px;width:1px;height:135px;background:#a0a0a0"></div>
<div style="left:976px;top:799px;width:1px;height:135px;background:#a0a0a0"></div>
<div style="left:1036px;top:799px;width:1px;height:135px;background:#a0a0a0"></div>
<div style="left:1194px;top:799px;width:1px;height:135px;background:#a0a0a0"></div>
<div style="left:1314px;top:799px;width:1px;height:135px;background:#a0a0a0"></div>
<div style="left:1472px;top:799px;width:1px;height:135px;background:#a0a0a0"></div>
<div style="left:1667px;top:799px;width:1px;height:135px;background:#a0a0a0"></div>
<div style="left:1742px;top:799px;width:1px;height:135px;background:#a0a0a0"></div>
</div>
<div style="left:13px;top:1069px;width:1741px;height:13px;background:#f8f8f8"></div>
<div style="left:13px;top:1069px;width:17px;height:13px;background:#f0f0f0;border-top:1px solid #ffffff;border-left:1px solid #ffffff;border-right:1px solid #696969"></div>
<svg style="position:absolute;left:17px;top:1072px" width="6" height="9" viewBox="0 0 6 9"><path d="M5 0.5V8.5L1 4.5Z" fill="#000"/></svg>
<div style="left:30px;top:1069px;width:907px;height:13px;background:#f0f0f0;border-top:1px solid #ffffff;border-left:1px solid #ffffff;border-right:1px solid #696969"></div>
<div style="left:1740px;top:1069px;width:14px;height:13px;background:#f0f0f0;border-top:1px solid #ffffff;border-left:1px solid #ffffff"></div>
<svg style="position:absolute;left:1745px;top:1072px" width="6" height="9" viewBox="0 0 6 9"><path d="M1 0.5V8.5L5 4.5Z" fill="#000"/></svg>
<div style="left:1px;top:1086px;width:1758px;height:1px;background:#ffffff"></div>
<div style="left:2px;top:1091px;width:85px;height:26px;border-top:1px solid #a0a0a0;border-left:1px solid #a0a0a0;border-bottom:1px solid #ffffff;border-right:1px solid #ffffff"></div>
<div style="left:91px;top:1091px;width:298px;height:26px;border-top:1px solid #a0a0a0;border-left:1px solid #a0a0a0;border-bottom:1px solid #ffffff;border-right:1px solid #ffffff"></div>
<div style="left:392px;top:1091px;width:1300px;height:26px;border-top:1px solid #a0a0a0;border-left:1px solid #a0a0a0;border-bottom:1px solid #ffffff;border-right:1px solid #ffffff"></div>
<div style="left:1695px;top:1091px;width:30px;height:26px;border-top:1px solid #a0a0a0;border-left:1px solid #a0a0a0;border-bottom:1px solid #ffffff;border-right:1px solid #ffffff"></div>
<div style="left:1729px;top:1091px;width:29px;height:26px;border-top:1px solid #a0a0a0;border-left:1px solid #a0a0a0;border-bottom:1px solid #ffffff;border-right:1px solid #ffffff"></div>
<div style="left:88px;top:1088px;width:1px;height:30px;background:#a0a0a0"></div>
<div style="left:89px;top:1088px;width:1px;height:30px;background:#ffffff"></div>
<div style="left:389.5px;top:1088px;width:1px;height:30px;background:#a0a0a0"></div>
<div style="left:396px;top:1096.84px;font-size:12px;line-height:14px;color:#000;white-space:nowrap;">ИТОГО (руб)</div>
<div style="left:472px;top:1096.84px;font-size:12px;line-height:14px;color:#000;white-space:nowrap;">По разделу: 890 147,04</div>
<div style="left:609px;top:1096.84px;font-size:12px;line-height:14px;color:#000;white-space:nowrap;">По ЛС: 890 147,04</div>
<div style="left:719px;top:1096.84px;font-size:12px;line-height:14px;color:#000;white-space:nowrap;">По объекту: 1 050 373,51</div>
<svg style="position:absolute;left:1702px;top:1096px" width="16" height="17" viewBox="0 0 16 17"><rect x="1" y="1" width="14" height="15" rx="5" fill="#9a9a9a"/><rect x="7" y="4" width="2" height="9" fill="#fff"/><path d="M0 1L16 16" stroke="#ff2020" stroke-width="1.6"/></svg>
<div style="left:1736.7px;top:1096.84px;font-size:12px;line-height:14px;color:#000;white-space:nowrap;">EN</div>
</body></html>
